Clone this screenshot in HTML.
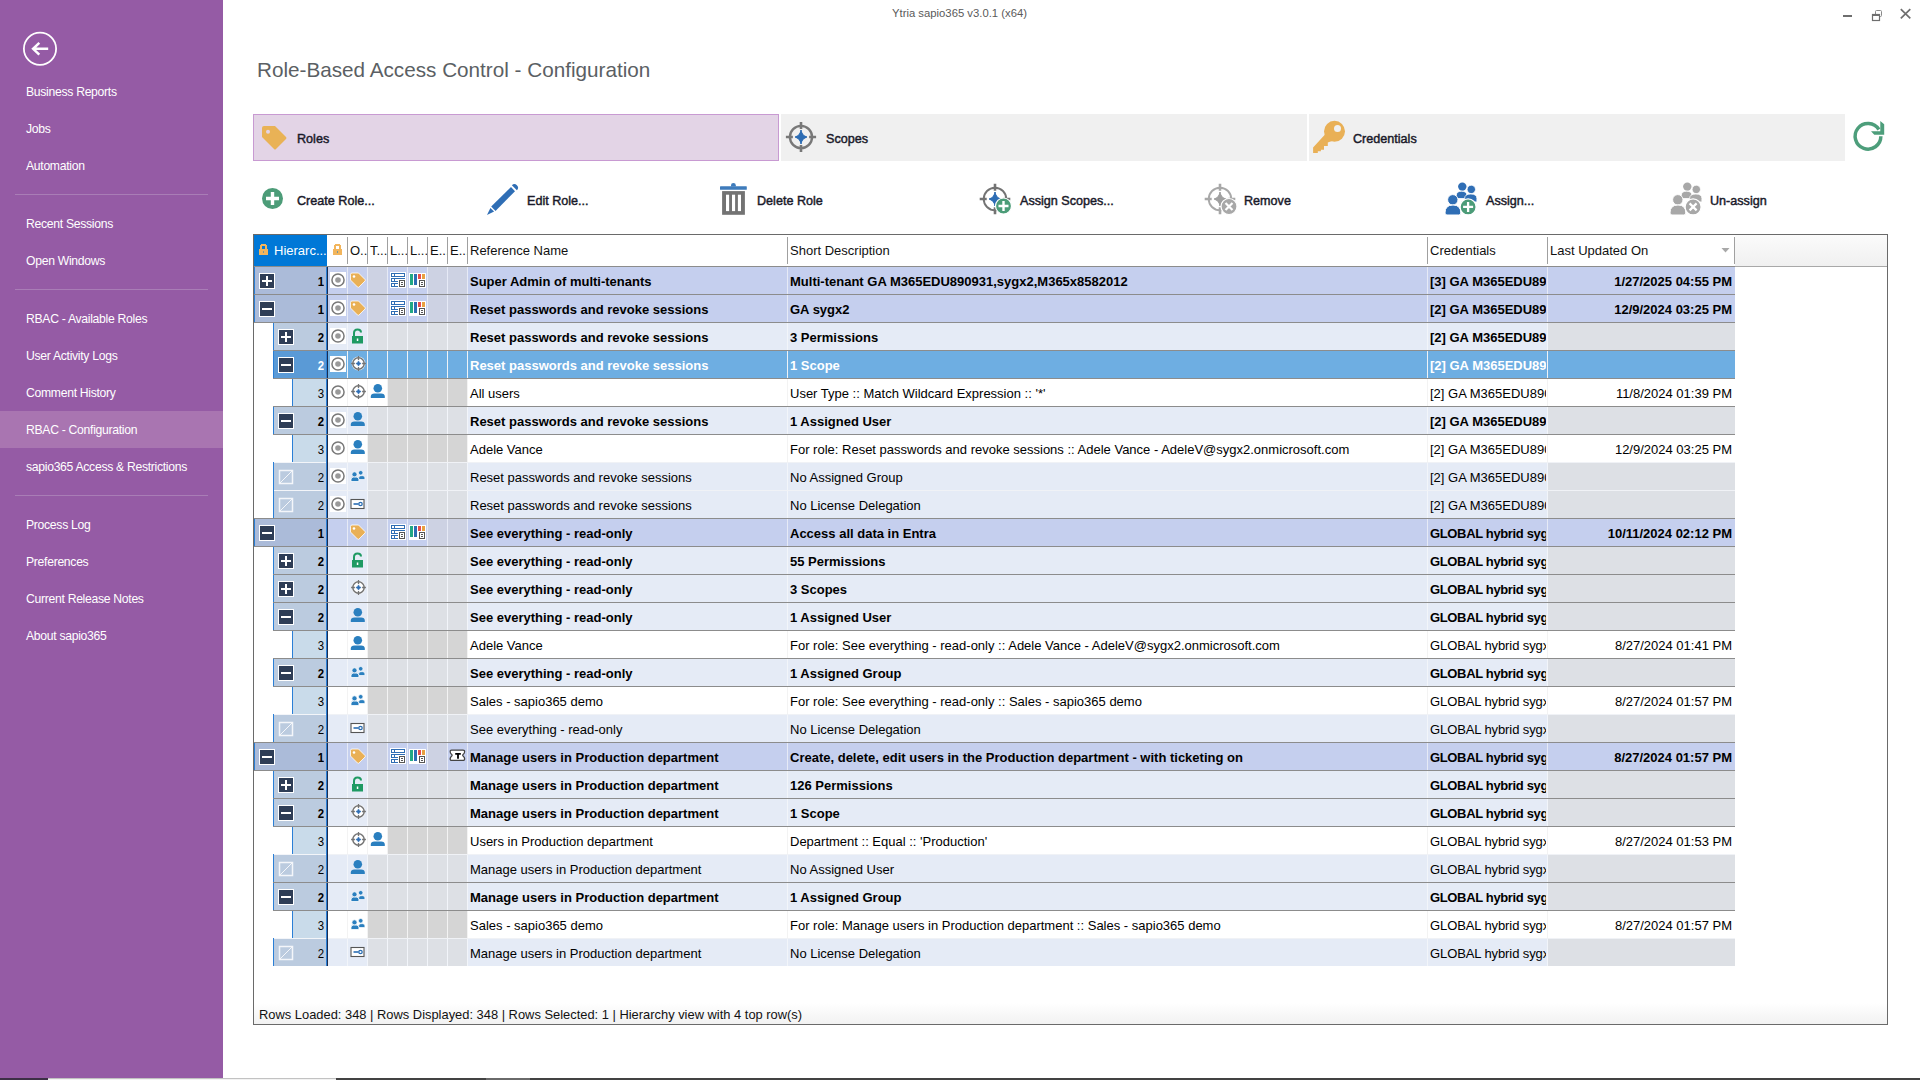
<!DOCTYPE html><html><head><meta charset="utf-8"><style>
*{margin:0;padding:0;box-sizing:border-box}
html,body{width:1920px;height:1080px;overflow:hidden;background:#fff;font-family:"Liberation Sans", sans-serif;}
.a{position:absolute}
.t{position:absolute;white-space:nowrap;line-height:1}
svg{position:absolute;overflow:visible}
</style></head><body><div class="a" style="left:0;top:0;width:223px;height:1078px;background:#955ba5"></div>
<div class="a" style="left:0;top:411px;width:223px;height:37px;background:#a975b1"></div>
<div class="a" style="left:15px;top:194px;width:193px;height:1px;background:#a97db6"></div>
<div class="a" style="left:15px;top:289px;width:193px;height:1px;background:#a97db6"></div>
<div class="a" style="left:15px;top:495px;width:193px;height:1px;background:#a97db6"></div>
<svg style="left:0;top:0" width="80" height="80"><circle cx="40" cy="48.8" r="16.1" fill="none" stroke="#fff" stroke-width="1.8"/><path d="M48.2 48.8 H33 M39.3 42.9 L33.1 48.8 L39.3 54.7" fill="none" stroke="#fff" stroke-width="2.5"/></svg>
<div class="t" style="left:26px;top:86px;font-size:12.2px;letter-spacing:-0.3px;color:#fff">Business Reports</div>
<div class="t" style="left:26px;top:123px;font-size:12.2px;letter-spacing:-0.3px;color:#fff">Jobs</div>
<div class="t" style="left:26px;top:160px;font-size:12.2px;letter-spacing:-0.3px;color:#fff">Automation</div>
<div class="t" style="left:26px;top:218px;font-size:12.2px;letter-spacing:-0.3px;color:#fff">Recent Sessions</div>
<div class="t" style="left:26px;top:255px;font-size:12.2px;letter-spacing:-0.3px;color:#fff">Open Windows</div>
<div class="t" style="left:26px;top:313px;font-size:12.2px;letter-spacing:-0.3px;color:#fff">RBAC - Available Roles</div>
<div class="t" style="left:26px;top:350px;font-size:12.2px;letter-spacing:-0.3px;color:#fff">User Activity Logs</div>
<div class="t" style="left:26px;top:387px;font-size:12.2px;letter-spacing:-0.3px;color:#fff">Comment History</div>
<div class="t" style="left:26px;top:424px;font-size:12.2px;letter-spacing:-0.3px;color:#fff">RBAC - Configuration</div>
<div class="t" style="left:26px;top:461px;font-size:12.2px;letter-spacing:-0.3px;color:#fff">sapio365 Access &amp; Restrictions</div>
<div class="t" style="left:26px;top:519px;font-size:12.2px;letter-spacing:-0.3px;color:#fff">Process Log</div>
<div class="t" style="left:26px;top:556px;font-size:12.2px;letter-spacing:-0.3px;color:#fff">Preferences</div>
<div class="t" style="left:26px;top:593px;font-size:12.2px;letter-spacing:-0.3px;color:#fff">Current Release Notes</div>
<div class="t" style="left:26px;top:630px;font-size:12.2px;letter-spacing:-0.3px;color:#fff">About sapio365</div>
<div class="a" style="left:0;top:1078px;width:1920px;height:2px;background:#434343"></div>
<div class="a" style="left:0;top:1078px;width:48px;height:2px;background:#3d2f46"></div>
<div class="a" style="left:48px;top:1078px;width:288px;height:1px;background:#c2c2c2"></div>
<div class="a" style="left:48px;top:1079px;width:288px;height:1px;background:#f2f2f2"></div>
<div class="a" style="left:486px;top:1078px;width:44px;height:2px;background:#6a6a6a"></div>
<div class="t" style="left:892px;top:8px;font-size:11.3px;color:#5a5a5a">Ytria sapio365 v3.0.1 (x64)</div>
<div class="a" style="left:1843px;top:15px;width:9px;height:2px;background:#6e6e6e"></div>
<svg style="left:1860px;top:0" width="40" height="30"><rect x="15.5" y="10.5" width="6" height="6" rx="1" fill="none" stroke="#8a8a8a" stroke-width="1"/><rect x="12.5" y="14.5" width="7" height="6" fill="#fff" stroke="#6e6e6e" stroke-width="1.2"/><rect x="12" y="14" width="8" height="2" fill="#6e6e6e"/></svg>
<svg style="left:1890px;top:0" width="30" height="30"><path d="M10.8 9.2 L20.3 18.3 M20.3 9.2 L10.8 18.3" stroke="#6e6e6e" stroke-width="1.7"/></svg>
<div class="t" style="left:257px;top:60px;font-size:20.7px;color:#5b5f64">Role-Based Access Control - Configuration</div>
<div class="a" style="left:253px;top:114px;width:526px;height:47px;background:#e3d4e6;border:1px solid #c89ad2"></div>
<div class="a" style="left:781px;top:114px;width:526px;height:47px;background:#f0f0f0"></div>
<div class="a" style="left:1309px;top:114px;width:536px;height:47px;background:#f0f0f0"></div>
<svg style="left:261px;top:125px" width="30" height="30"><path d="M1 3 Q1 1 3 1 L14 1 L25 12 Q26 13 25 14 L15 24 Q14 25 13 24 L1 12 Z" fill="#e9b256"/><circle cx="7" cy="6.8" r="2" fill="#e3d4e6"/></svg>
<div class="t" style="left:297px;top:133px;font-size:12.6px;-webkit-text-stroke:0.45px #1a1a2a;color:#1a1a2a">Roles</div>
<svg style="left:780px;top:116px" width="42" height="42"><circle cx="21" cy="21" r="11.1" fill="none" stroke="#787878" stroke-width="2.4"/><path d="M21 5.9 V12.9 M21 29.1 V36.1 M5.9 21 H12.9 M29.1 21 H36.1" stroke="#787878" stroke-width="2.6"/><path d="M21 15.7 Q22.5 19.5 26.3 21 Q22.5 22.5 21 26.3 Q19.5 22.5 15.7 21 Q19.5 19.5 21 15.7 Z" fill="#2e6db4" stroke="#2e6db4" stroke-width="1.2" stroke-linejoin="round"/><path d="M21 14.1 V27.9 M15.1 21 H26.9" stroke="#2e6db4" stroke-width="1.7"/></svg>
<div class="t" style="left:826px;top:133px;font-size:12.6px;-webkit-text-stroke:0.45px #1a1a2a;color:#1a1a2a">Scopes</div>
<svg style="left:1310px;top:116px" width="42" height="42"><circle cx="24.5" cy="15.3" r="10.5" fill="#e9b056"/><circle cx="27.5" cy="12.4" r="3.5" fill="#f0f0f0"/><path d="M15 18.6 L3.1 31.5 L3.1 37 L7.8 37 L7.8 35.3 L10.9 35.3 L10.9 33.7 L14 33.7 L14 30 L17.8 30 L17.8 26.5 L22 25 Z" fill="#e9b056"/></svg>
<div class="t" style="left:1353px;top:133px;font-size:12.6px;-webkit-text-stroke:0.45px #1a1a2a;color:#1a1a2a">Credentials</div>
<svg style="left:1840px;top:110px" width="50" height="50"><path d="M40.85 26.3 A12.85 12.85 0 1 1 38.9 19.5" fill="none" stroke="#4d9e7b" stroke-width="3.5"/><path d="M40.3 11 L44.2 14.3 L44.2 24.8 L34.3 24.8 L31 21.2 L40.3 21.2 Z" fill="#4d9e7b"/></svg>
<svg style="left:255px;top:180px" width="40" height="40"><circle cx="17.5" cy="18.5" r="10.5" fill="#4c9c78"/><path d="M17.5 12 V25 M11 18.5 H24" stroke="#fff" stroke-width="3.4"/></svg>
<div class="t" style="left:297px;top:195px;font-size:12.6px;-webkit-text-stroke:0.45px #1a1a2a;color:#1a1a2a">Create Role...</div>
<svg style="left:480px;top:176px" width="48" height="48"><path d="M11.2 30.5 L31 11 L35 15.2 L15.5 35 Z" fill="#2f6eb5"/><path d="M7 38.9 L10.4 32 L14.1 35.4 Z" fill="#2f6eb5"/><path d="M31.9 9.3 A3.5 3.5 0 0 1 36.9 14.3 Z" fill="#2f6eb5"/></svg>
<div class="t" style="left:527px;top:195px;font-size:12.6px;-webkit-text-stroke:0.45px #1a1a2a;color:#1a1a2a">Edit Role...</div>
<svg style="left:710px;top:176px" width="48" height="48"><rect x="10" y="10.2" width="26.8" height="3.6" rx="0.6" fill="#3e7bbb"/><path d="M21 10.5 V9.2 Q21 7 23.4 7 Q25.8 7 25.8 9.2 V10.5 Z" fill="#3e7bbb"/><rect x="12.1" y="15.1" width="22.8" height="23.7" fill="#737373"/><rect x="16" y="18.7" width="3.1" height="16.4" fill="#fff"/><rect x="22" y="18.7" width="3.1" height="16.4" fill="#fff"/><rect x="27.9" y="18.7" width="3.1" height="16.4" fill="#fff"/></svg>
<div class="t" style="left:757px;top:195px;font-size:12.6px;-webkit-text-stroke:0.45px #1a1a2a;color:#1a1a2a">Delete Role</div>
<svg style="left:970px;top:176px" width="48" height="48"><circle cx="25" cy="23" r="11.3" fill="none" stroke="#737373" stroke-width="1.9"/><path d="M25 7.699999999999999 V14.7 M25 31.299999999999997 V38.3 M9.7 23 H16.7 M33.3 23 H40.3" stroke="#737373" stroke-width="2.6"/><path d="M25 17.7 Q26.5 21.5 30.3 23 Q26.5 24.5 25 28.3 Q23.5 24.5 19.7 23 Q23.5 21.5 25 17.7 Z" fill="#2e6db4" stroke="#2e6db4" stroke-width="1.2" stroke-linejoin="round"/><path d="M25 16.1 V29.9 M19.1 23 H30.9" stroke="#2e6db4" stroke-width="1.7"/><circle cx="33.5" cy="30" r="8" fill="#4c9c78" stroke="#fff" stroke-width="1.2"/><path d="M33.5 25 V35 M28.5 30 H38.5" stroke="#fff" stroke-width="2.4"/></svg>
<div class="t" style="left:1020px;top:195px;font-size:12.6px;-webkit-text-stroke:0.45px #1a1a2a;color:#1a1a2a">Assign Scopes...</div>
<svg style="left:1195px;top:176px" width="48" height="48"><circle cx="25" cy="23" r="11.3" fill="none" stroke="#a8a8a8" stroke-width="1.9"/><path d="M25 7.699999999999999 V14.7 M25 31.299999999999997 V38.3 M9.7 23 H16.7 M33.3 23 H40.3" stroke="#a8a8a8" stroke-width="2.6"/><path d="M25 17.7 Q26.5 21.5 30.3 23 Q26.5 24.5 25 28.3 Q23.5 24.5 19.7 23 Q23.5 21.5 25 17.7 Z" fill="#a0a0a0" stroke="#a0a0a0" stroke-width="1.2" stroke-linejoin="round"/><path d="M25 16.1 V29.9 M19.1 23 H30.9" stroke="#a0a0a0" stroke-width="1.7"/><circle cx="34" cy="30.5" r="8" fill="#a8a8a8" stroke="#fff" stroke-width="1.2"/><path d="M30.5 27 L37.5 34 M37.5 27 L30.5 34" stroke="#fff" stroke-width="2.2"/></svg>
<div class="t" style="left:1244px;top:195px;font-size:12.6px;-webkit-text-stroke:0.45px #1a1a2a;color:#1a1a2a">Remove</div>
<svg style="left:1435px;top:175px" width="48" height="48"><circle cx="27.3" cy="11.6" r="4.2" fill="#2f6eb5"/><path d="M21.3 23.5 V20.5 Q21.3 16.2 26.6 16.2 Q31.9 16.2 31.9 20.5 V23.5 Z" fill="#2f6eb5" stroke="#fff" stroke-width="0.8"/><circle cx="36.3" cy="14.4" r="4.2" fill="#2f6eb5" stroke="#fff" stroke-width="0.8"/><path d="M29.6 26.9 V23.5 Q29.6 19 35.8 19 Q41.9 19 41.9 23.5 V26.9 Z" fill="#2f6eb5" stroke="#fff" stroke-width="0.8"/><circle cx="17.8" cy="24.8" r="5.2" fill="#2f6eb5" stroke="#fff" stroke-width="1"/><path d="M10 38 Q10 30 18 30 Q25.8 30 25.8 38 Q25.8 40 23.8 40 H12 Q10 40 10 38 Z" fill="#2f6eb5" stroke="#fff" stroke-width="1"/><circle cx="33.1" cy="31.9" r="8" fill="#4c9c78" stroke="#fff" stroke-width="1.2"/><path d="M33.1 27 V37 M28.1 31.9 H38.1" stroke="#fff" stroke-width="2.3"/></svg>
<div class="t" style="left:1486px;top:195px;font-size:12.6px;-webkit-text-stroke:0.45px #1a1a2a;color:#1a1a2a">Assign...</div>
<svg style="left:1660px;top:175px" width="48" height="48"><circle cx="27.3" cy="11.6" r="4.2" fill="#a8a8a8"/><path d="M21.3 23.5 V20.5 Q21.3 16.2 26.6 16.2 Q31.9 16.2 31.9 20.5 V23.5 Z" fill="#a8a8a8" stroke="#fff" stroke-width="0.8"/><circle cx="36.3" cy="14.4" r="4.2" fill="#a8a8a8" stroke="#fff" stroke-width="0.8"/><path d="M29.6 26.9 V23.5 Q29.6 19 35.8 19 Q41.9 19 41.9 23.5 V26.9 Z" fill="#a8a8a8" stroke="#fff" stroke-width="0.8"/><circle cx="17.8" cy="24.8" r="5.2" fill="#a8a8a8" stroke="#fff" stroke-width="1"/><path d="M10 38 Q10 30 18 30 Q25.8 30 25.8 38 Q25.8 40 23.8 40 H12 Q10 40 10 38 Z" fill="#a8a8a8" stroke="#fff" stroke-width="1"/><circle cx="33.1" cy="31.9" r="8" fill="#a8a8a8" stroke="#fff" stroke-width="1.2"/><path d="M29.6 28.4 L36.6 35.4 M36.6 28.4 L29.6 35.4" stroke="#fff" stroke-width="2.2"/></svg>
<div class="t" style="left:1710px;top:195px;font-size:12.6px;-webkit-text-stroke:0.45px #1a1a2a;color:#1a1a2a">Un-assign</div>
<div class="a" style="left:253px;top:234px;width:1635px;height:791px;border:1px solid #6a6a6a;background:#fff"></div>
<div class="a" style="left:1735px;top:235px;width:152px;height:31px;background:linear-gradient(#fbfbfb,#f0f0f0)"></div>
<div class="a" style="left:254px;top:235px;width:73px;height:31px;background:#0078d7"></div>
<div class="a" style="left:254px;top:266px;width:1633px;height:1px;background:#a8a8a8"></div>
<svg style="left:259px;top:244px" width="10" height="12" shape-rendering="crispEdges"><rect x="0" y="5" width="9" height="6" fill="#f2b55c"/><rect x="1" y="1" width="2" height="4" fill="#f2b55c"/><rect x="6" y="1" width="2" height="4" fill="#f2b55c"/><rect x="2" y="0" width="5" height="2" fill="#f2b55c"/><rect x="4" y="7" width="1" height="2" fill="#0078d7" opacity="0.5"/></svg>
<div class="t" style="left:274px;top:244px;font-size:13px;color:#fff">Hierarc...</div>
<svg style="left:333px;top:244px" width="10" height="12" shape-rendering="crispEdges"><rect x="0" y="5" width="9" height="6" fill="#f2b55c"/><rect x="1" y="1" width="2" height="4" fill="#f2b55c"/><rect x="6" y="1" width="2" height="4" fill="#f2b55c"/><rect x="2" y="0" width="5" height="2" fill="#f2b55c"/><rect x="4" y="7" width="1" height="2" fill="#0078d7" opacity="0.5"/></svg>
<div class="a" style="left:347px;top:237px;width:1px;height:27px;background:#a0a0a0"></div>
<div class="a" style="left:350px;top:240px;width:17px;height:22px;overflow:hidden"><div class="t" style="left:0;top:4px;font-size:13px;color:#111">O..</div></div>
<div class="a" style="left:367px;top:237px;width:1px;height:27px;background:#a0a0a0"></div>
<div class="a" style="left:370px;top:240px;width:17px;height:22px;overflow:hidden"><div class="t" style="left:0;top:4px;font-size:13px;color:#111">T...</div></div>
<div class="a" style="left:387px;top:237px;width:1px;height:27px;background:#a0a0a0"></div>
<div class="a" style="left:390px;top:240px;width:17px;height:22px;overflow:hidden"><div class="t" style="left:0;top:4px;font-size:13px;color:#111">L...</div></div>
<div class="a" style="left:407px;top:237px;width:1px;height:27px;background:#a0a0a0"></div>
<div class="a" style="left:410px;top:240px;width:17px;height:22px;overflow:hidden"><div class="t" style="left:0;top:4px;font-size:13px;color:#111">L...</div></div>
<div class="a" style="left:427px;top:237px;width:1px;height:27px;background:#a0a0a0"></div>
<div class="a" style="left:430px;top:240px;width:17px;height:22px;overflow:hidden"><div class="t" style="left:0;top:4px;font-size:13px;color:#111">E...</div></div>
<div class="a" style="left:447px;top:237px;width:1px;height:27px;background:#a0a0a0"></div>
<div class="a" style="left:450px;top:240px;width:17px;height:22px;overflow:hidden"><div class="t" style="left:0;top:4px;font-size:13px;color:#111">E...</div></div>
<div class="a" style="left:467px;top:237px;width:1px;height:27px;background:#a0a0a0"></div>
<div class="a" style="left:470px;top:240px;width:300px;height:22px;overflow:hidden"><div class="t" style="left:0;top:4px;font-size:13px;color:#111">Reference Name</div></div>
<div class="a" style="left:787px;top:237px;width:1px;height:27px;background:#a0a0a0"></div>
<div class="a" style="left:790px;top:240px;width:300px;height:22px;overflow:hidden"><div class="t" style="left:0;top:4px;font-size:13px;color:#111">Short Description</div></div>
<div class="a" style="left:1427px;top:237px;width:1px;height:27px;background:#a0a0a0"></div>
<div class="a" style="left:1430px;top:240px;width:300px;height:22px;overflow:hidden"><div class="t" style="left:0;top:4px;font-size:13px;color:#111">Credentials</div></div>
<div class="a" style="left:1547px;top:237px;width:1px;height:27px;background:#a0a0a0"></div>
<div class="a" style="left:1550px;top:240px;width:300px;height:22px;overflow:hidden"><div class="t" style="left:0;top:4px;font-size:13px;color:#111">Last Updated On</div></div>
<div class="a" style="left:1734px;top:237px;width:1px;height:27px;background:#a0a0a0"></div>
<svg style="left:1718px;top:245.5px" width="14" height="10"><path d="M3.5 2 L11.5 2 L7.5 6.5 Z" fill="#a8a8a8"/></svg>
<div class="a" style="left:254px;top:266px;width:72px;height:28px;background:#abbbd9"></div>
<div class="a" style="left:254px;top:266px;width:1px;height:28px;background:#2b7fd6"></div>
<div class="a" style="left:328px;top:266px;width:1407px;height:28px;background:#c5cfee"></div>
<div class="a" style="left:367px;top:266px;width:20px;height:28px;background:#cdd2e3"></div>
<div class="a" style="left:427px;top:266px;width:20px;height:28px;background:#cdd2e3"></div>
<div class="a" style="left:447px;top:266px;width:20px;height:28px;background:#cdd2e3"></div>
<div class="a" style="left:347px;top:266px;width:1px;height:28px;background:#e6eaf6"></div>
<div class="a" style="left:367px;top:266px;width:1px;height:28px;background:#e6eaf6"></div>
<div class="a" style="left:387px;top:266px;width:1px;height:28px;background:#e6eaf6"></div>
<div class="a" style="left:407px;top:266px;width:1px;height:28px;background:#e6eaf6"></div>
<div class="a" style="left:427px;top:266px;width:1px;height:28px;background:#e6eaf6"></div>
<div class="a" style="left:447px;top:266px;width:1px;height:28px;background:#e6eaf6"></div>
<div class="a" style="left:467px;top:266px;width:1px;height:28px;background:#e6eaf6"></div>
<div class="a" style="left:787px;top:266px;width:1px;height:28px;background:#e6eaf6"></div>
<div class="a" style="left:1427px;top:266px;width:1px;height:28px;background:#e6eaf6"></div>
<div class="a" style="left:1547px;top:266px;width:1px;height:28px;background:#e6eaf6"></div>
<div class="a" style="left:326px;top:266px;width:1px;height:28px;background:#2b7fd6"></div>
<div class="a" style="left:327px;top:266px;width:1px;height:28px;background:#1a2d50"></div>
<div class="t" style="left:254px;width:70px;text-align:right;top:275px;font-size:13px;font-weight:bold;color:#000;transform:scaleX(0.88);transform-origin:100% 50%">1</div>
<div class="t" style="left:470px;top:275px;font-size:13px;font-weight:bold;color:#000">Super Admin of multi-tenants</div>
<div class="t" style="left:790px;top:275px;font-size:13px;font-weight:bold;color:#000">Multi-tenant GA M365EDU890931,sygx2,M365x8582012</div>
<div class="a" style="left:1430px;top:267px;width:116px;height:26px;overflow:hidden"><div class="t" style="left:0;top:8px;font-size:13px;font-weight:bold;letter-spacing:0px;color:#000">[3] GA M365EDU890931</div></div>
<div class="t" style="left:1548px;width:184px;text-align:right;top:275px;font-size:13px;font-weight:bold;color:#000">1/27/2025 04:55 PM</div>
<div class="a" style="left:254px;top:294px;width:72px;height:28px;background:#abbbd9"></div>
<div class="a" style="left:254px;top:294px;width:1px;height:28px;background:#2b7fd6"></div>
<div class="a" style="left:328px;top:294px;width:1407px;height:28px;background:#c5cfee"></div>
<div class="a" style="left:367px;top:294px;width:20px;height:28px;background:#cdd2e3"></div>
<div class="a" style="left:427px;top:294px;width:20px;height:28px;background:#cdd2e3"></div>
<div class="a" style="left:447px;top:294px;width:20px;height:28px;background:#cdd2e3"></div>
<div class="a" style="left:347px;top:294px;width:1px;height:28px;background:#e6eaf6"></div>
<div class="a" style="left:367px;top:294px;width:1px;height:28px;background:#e6eaf6"></div>
<div class="a" style="left:387px;top:294px;width:1px;height:28px;background:#e6eaf6"></div>
<div class="a" style="left:407px;top:294px;width:1px;height:28px;background:#e6eaf6"></div>
<div class="a" style="left:427px;top:294px;width:1px;height:28px;background:#e6eaf6"></div>
<div class="a" style="left:447px;top:294px;width:1px;height:28px;background:#e6eaf6"></div>
<div class="a" style="left:467px;top:294px;width:1px;height:28px;background:#e6eaf6"></div>
<div class="a" style="left:787px;top:294px;width:1px;height:28px;background:#e6eaf6"></div>
<div class="a" style="left:1427px;top:294px;width:1px;height:28px;background:#e6eaf6"></div>
<div class="a" style="left:1547px;top:294px;width:1px;height:28px;background:#e6eaf6"></div>
<div class="a" style="left:326px;top:294px;width:1px;height:28px;background:#2b7fd6"></div>
<div class="a" style="left:327px;top:294px;width:1px;height:28px;background:#1a2d50"></div>
<div class="t" style="left:254px;width:70px;text-align:right;top:303px;font-size:13px;font-weight:bold;color:#000;transform:scaleX(0.88);transform-origin:100% 50%">1</div>
<div class="t" style="left:470px;top:303px;font-size:13px;font-weight:bold;color:#000">Reset passwords and revoke sessions</div>
<div class="t" style="left:790px;top:303px;font-size:13px;font-weight:bold;color:#000">GA sygx2</div>
<div class="a" style="left:1430px;top:295px;width:116px;height:26px;overflow:hidden"><div class="t" style="left:0;top:8px;font-size:13px;font-weight:bold;letter-spacing:0px;color:#000">[2] GA M365EDU890931</div></div>
<div class="t" style="left:1548px;width:184px;text-align:right;top:303px;font-size:13px;font-weight:bold;color:#000">12/9/2024 03:25 PM</div>
<div class="a" style="left:273px;top:322px;width:53px;height:28px;background:#bbcbdf"></div>
<div class="a" style="left:273px;top:322px;width:1px;height:28px;background:#2b7fd6"></div>
<div class="a" style="left:328px;top:322px;width:1407px;height:28px;background:#e5ebf6"></div>
<div class="a" style="left:367px;top:322px;width:20px;height:28px;background:#dde0e5"></div>
<div class="a" style="left:387px;top:322px;width:40px;height:28px;background:#dde0e5"></div>
<div class="a" style="left:427px;top:322px;width:20px;height:28px;background:#dde0e5"></div>
<div class="a" style="left:447px;top:322px;width:20px;height:28px;background:#dde0e5"></div>
<div class="a" style="left:1547px;top:322px;width:188px;height:28px;background:#dde0e5"></div>
<div class="a" style="left:347px;top:322px;width:1px;height:28px;background:#f2f5fa"></div>
<div class="a" style="left:367px;top:322px;width:1px;height:28px;background:#f2f5fa"></div>
<div class="a" style="left:387px;top:322px;width:1px;height:28px;background:#f2f5fa"></div>
<div class="a" style="left:407px;top:322px;width:1px;height:28px;background:#f2f5fa"></div>
<div class="a" style="left:427px;top:322px;width:1px;height:28px;background:#f2f5fa"></div>
<div class="a" style="left:447px;top:322px;width:1px;height:28px;background:#f2f5fa"></div>
<div class="a" style="left:467px;top:322px;width:1px;height:28px;background:#f2f5fa"></div>
<div class="a" style="left:787px;top:322px;width:1px;height:28px;background:#f2f5fa"></div>
<div class="a" style="left:1427px;top:322px;width:1px;height:28px;background:#f2f5fa"></div>
<div class="a" style="left:1547px;top:322px;width:1px;height:28px;background:#f2f5fa"></div>
<div class="a" style="left:326px;top:322px;width:1px;height:28px;background:#2b7fd6"></div>
<div class="a" style="left:327px;top:322px;width:1px;height:28px;background:#1a2d50"></div>
<div class="t" style="left:273px;width:51px;text-align:right;top:331px;font-size:13px;font-weight:bold;color:#000;transform:scaleX(0.88);transform-origin:100% 50%">2</div>
<div class="t" style="left:470px;top:331px;font-size:13px;font-weight:bold;color:#000">Reset passwords and revoke sessions</div>
<div class="t" style="left:790px;top:331px;font-size:13px;font-weight:bold;color:#000">3 Permissions</div>
<div class="a" style="left:1430px;top:323px;width:116px;height:26px;overflow:hidden"><div class="t" style="left:0;top:8px;font-size:13px;font-weight:bold;letter-spacing:0px;color:#000">[2] GA M365EDU890931</div></div>
<div class="a" style="left:273px;top:350px;width:53px;height:28px;background:#5a9ad6"></div>
<div class="a" style="left:273px;top:350px;width:1px;height:28px;background:#2b7fd6"></div>
<div class="a" style="left:328px;top:350px;width:1407px;height:28px;background:#6eaee2"></div>
<div class="a" style="left:367px;top:350px;width:20px;height:28px;background:#6eaee2"></div>
<div class="a" style="left:387px;top:350px;width:40px;height:28px;background:#6eaee2"></div>
<div class="a" style="left:427px;top:350px;width:20px;height:28px;background:#6eaee2"></div>
<div class="a" style="left:447px;top:350px;width:20px;height:28px;background:#6eaee2"></div>
<div class="a" style="left:1547px;top:350px;width:188px;height:28px;background:#6eaee2"></div>
<div class="a" style="left:347px;top:350px;width:1px;height:28px;background:#eef2f6"></div>
<div class="a" style="left:367px;top:350px;width:1px;height:28px;background:#eef2f6"></div>
<div class="a" style="left:387px;top:350px;width:1px;height:28px;background:#eef2f6"></div>
<div class="a" style="left:407px;top:350px;width:1px;height:28px;background:#eef2f6"></div>
<div class="a" style="left:427px;top:350px;width:1px;height:28px;background:#eef2f6"></div>
<div class="a" style="left:447px;top:350px;width:1px;height:28px;background:#eef2f6"></div>
<div class="a" style="left:467px;top:350px;width:1px;height:28px;background:#eef2f6"></div>
<div class="a" style="left:787px;top:350px;width:1px;height:28px;background:#eef2f6"></div>
<div class="a" style="left:1427px;top:350px;width:1px;height:28px;background:#eef2f6"></div>
<div class="a" style="left:1547px;top:350px;width:1px;height:28px;background:#eef2f6"></div>
<div class="a" style="left:326px;top:350px;width:1px;height:28px;background:#2b7fd6"></div>
<div class="a" style="left:327px;top:350px;width:1px;height:28px;background:#1a2d50"></div>
<div class="t" style="left:273px;width:51px;text-align:right;top:359px;font-size:13px;font-weight:bold;color:#fff;transform:scaleX(0.88);transform-origin:100% 50%">2</div>
<div class="t" style="left:470px;top:359px;font-size:13px;font-weight:bold;color:#fff">Reset passwords and revoke sessions</div>
<div class="t" style="left:790px;top:359px;font-size:13px;font-weight:bold;color:#fff">1 Scope</div>
<div class="a" style="left:1430px;top:351px;width:116px;height:26px;overflow:hidden"><div class="t" style="left:0;top:8px;font-size:13px;font-weight:bold;letter-spacing:0px;color:#fff">[2] GA M365EDU890931</div></div>
<div class="a" style="left:292px;top:378px;width:34px;height:28px;background:#c9dbea"></div>
<div class="a" style="left:292px;top:378px;width:1px;height:28px;background:#2b7fd6"></div>
<div class="a" style="left:328px;top:378px;width:1407px;height:28px;background:#ffffff"></div>
<div class="a" style="left:387px;top:378px;width:40px;height:28px;background:#d5d5d5"></div>
<div class="a" style="left:427px;top:378px;width:20px;height:28px;background:#d5d5d5"></div>
<div class="a" style="left:447px;top:378px;width:20px;height:28px;background:#d5d5d5"></div>
<div class="a" style="left:347px;top:378px;width:1px;height:28px;background:#f3f3f3"></div>
<div class="a" style="left:367px;top:378px;width:1px;height:28px;background:#f3f3f3"></div>
<div class="a" style="left:387px;top:378px;width:1px;height:28px;background:#f3f3f3"></div>
<div class="a" style="left:407px;top:378px;width:1px;height:28px;background:#f3f3f3"></div>
<div class="a" style="left:427px;top:378px;width:1px;height:28px;background:#f3f3f3"></div>
<div class="a" style="left:447px;top:378px;width:1px;height:28px;background:#f3f3f3"></div>
<div class="a" style="left:467px;top:378px;width:1px;height:28px;background:#f3f3f3"></div>
<div class="a" style="left:787px;top:378px;width:1px;height:28px;background:#f3f3f3"></div>
<div class="a" style="left:1427px;top:378px;width:1px;height:28px;background:#f3f3f3"></div>
<div class="a" style="left:1547px;top:378px;width:1px;height:28px;background:#f3f3f3"></div>
<div class="a" style="left:326px;top:378px;width:1px;height:28px;background:#2b7fd6"></div>
<div class="a" style="left:327px;top:378px;width:1px;height:28px;background:#1a2d50"></div>
<div class="t" style="left:292px;width:32px;text-align:right;top:387px;font-size:13px;font-weight:normal;color:#000;transform:scaleX(0.88);transform-origin:100% 50%">3</div>
<div class="t" style="left:470px;top:387px;font-size:13px;font-weight:normal;color:#000">All users</div>
<div class="t" style="left:790px;top:387px;font-size:13px;font-weight:normal;color:#000">User Type :: Match Wildcard Expression :: '*'</div>
<div class="a" style="left:1430px;top:379px;width:116px;height:26px;overflow:hidden"><div class="t" style="left:0;top:8px;font-size:13px;font-weight:normal;letter-spacing:0px;color:#000">[2] GA M365EDU890931</div></div>
<div class="t" style="left:1548px;width:184px;text-align:right;top:387px;font-size:13px;font-weight:normal;color:#000">11/8/2024 01:39 PM</div>
<div class="a" style="left:273px;top:406px;width:53px;height:28px;background:#bbcbdf"></div>
<div class="a" style="left:273px;top:406px;width:1px;height:28px;background:#2b7fd6"></div>
<div class="a" style="left:328px;top:406px;width:1407px;height:28px;background:#e5ebf6"></div>
<div class="a" style="left:367px;top:406px;width:20px;height:28px;background:#dde0e5"></div>
<div class="a" style="left:387px;top:406px;width:40px;height:28px;background:#dde0e5"></div>
<div class="a" style="left:427px;top:406px;width:20px;height:28px;background:#dde0e5"></div>
<div class="a" style="left:447px;top:406px;width:20px;height:28px;background:#dde0e5"></div>
<div class="a" style="left:1547px;top:406px;width:188px;height:28px;background:#dde0e5"></div>
<div class="a" style="left:347px;top:406px;width:1px;height:28px;background:#f2f5fa"></div>
<div class="a" style="left:367px;top:406px;width:1px;height:28px;background:#f2f5fa"></div>
<div class="a" style="left:387px;top:406px;width:1px;height:28px;background:#f2f5fa"></div>
<div class="a" style="left:407px;top:406px;width:1px;height:28px;background:#f2f5fa"></div>
<div class="a" style="left:427px;top:406px;width:1px;height:28px;background:#f2f5fa"></div>
<div class="a" style="left:447px;top:406px;width:1px;height:28px;background:#f2f5fa"></div>
<div class="a" style="left:467px;top:406px;width:1px;height:28px;background:#f2f5fa"></div>
<div class="a" style="left:787px;top:406px;width:1px;height:28px;background:#f2f5fa"></div>
<div class="a" style="left:1427px;top:406px;width:1px;height:28px;background:#f2f5fa"></div>
<div class="a" style="left:1547px;top:406px;width:1px;height:28px;background:#f2f5fa"></div>
<div class="a" style="left:326px;top:406px;width:1px;height:28px;background:#2b7fd6"></div>
<div class="a" style="left:327px;top:406px;width:1px;height:28px;background:#1a2d50"></div>
<div class="t" style="left:273px;width:51px;text-align:right;top:415px;font-size:13px;font-weight:bold;color:#000;transform:scaleX(0.88);transform-origin:100% 50%">2</div>
<div class="t" style="left:470px;top:415px;font-size:13px;font-weight:bold;color:#000">Reset passwords and revoke sessions</div>
<div class="t" style="left:790px;top:415px;font-size:13px;font-weight:bold;color:#000">1 Assigned User</div>
<div class="a" style="left:1430px;top:407px;width:116px;height:26px;overflow:hidden"><div class="t" style="left:0;top:8px;font-size:13px;font-weight:bold;letter-spacing:0px;color:#000">[2] GA M365EDU890931</div></div>
<div class="a" style="left:292px;top:434px;width:34px;height:28px;background:#c9dbea"></div>
<div class="a" style="left:292px;top:434px;width:1px;height:28px;background:#2b7fd6"></div>
<div class="a" style="left:328px;top:434px;width:1407px;height:28px;background:#ffffff"></div>
<div class="a" style="left:367px;top:434px;width:20px;height:28px;background:#d5d5d5"></div>
<div class="a" style="left:387px;top:434px;width:40px;height:28px;background:#d5d5d5"></div>
<div class="a" style="left:427px;top:434px;width:20px;height:28px;background:#d5d5d5"></div>
<div class="a" style="left:447px;top:434px;width:20px;height:28px;background:#d5d5d5"></div>
<div class="a" style="left:347px;top:434px;width:1px;height:28px;background:#f3f3f3"></div>
<div class="a" style="left:367px;top:434px;width:1px;height:28px;background:#f3f3f3"></div>
<div class="a" style="left:387px;top:434px;width:1px;height:28px;background:#f3f3f3"></div>
<div class="a" style="left:407px;top:434px;width:1px;height:28px;background:#f3f3f3"></div>
<div class="a" style="left:427px;top:434px;width:1px;height:28px;background:#f3f3f3"></div>
<div class="a" style="left:447px;top:434px;width:1px;height:28px;background:#f3f3f3"></div>
<div class="a" style="left:467px;top:434px;width:1px;height:28px;background:#f3f3f3"></div>
<div class="a" style="left:787px;top:434px;width:1px;height:28px;background:#f3f3f3"></div>
<div class="a" style="left:1427px;top:434px;width:1px;height:28px;background:#f3f3f3"></div>
<div class="a" style="left:1547px;top:434px;width:1px;height:28px;background:#f3f3f3"></div>
<div class="a" style="left:326px;top:434px;width:1px;height:28px;background:#2b7fd6"></div>
<div class="a" style="left:327px;top:434px;width:1px;height:28px;background:#1a2d50"></div>
<div class="t" style="left:292px;width:32px;text-align:right;top:443px;font-size:13px;font-weight:normal;color:#000;transform:scaleX(0.88);transform-origin:100% 50%">3</div>
<div class="t" style="left:470px;top:443px;font-size:13px;font-weight:normal;color:#000">Adele Vance</div>
<div class="t" style="left:790px;top:443px;font-size:13px;font-weight:normal;color:#000">For role: Reset passwords and revoke sessions :: Adele Vance - AdeleV@sygx2.onmicrosoft.com</div>
<div class="a" style="left:1430px;top:435px;width:116px;height:26px;overflow:hidden"><div class="t" style="left:0;top:8px;font-size:13px;font-weight:normal;letter-spacing:0px;color:#000">[2] GA M365EDU890931</div></div>
<div class="t" style="left:1548px;width:184px;text-align:right;top:443px;font-size:13px;font-weight:normal;color:#000">12/9/2024 03:25 PM</div>
<div class="a" style="left:273px;top:462px;width:53px;height:28px;background:#bbcbdf"></div>
<div class="a" style="left:273px;top:462px;width:1px;height:28px;background:#2b7fd6"></div>
<div class="a" style="left:328px;top:462px;width:1407px;height:28px;background:#e5ebf6"></div>
<div class="a" style="left:367px;top:462px;width:20px;height:28px;background:#dde0e5"></div>
<div class="a" style="left:387px;top:462px;width:40px;height:28px;background:#dde0e5"></div>
<div class="a" style="left:427px;top:462px;width:20px;height:28px;background:#dde0e5"></div>
<div class="a" style="left:447px;top:462px;width:20px;height:28px;background:#dde0e5"></div>
<div class="a" style="left:1547px;top:462px;width:188px;height:28px;background:#dde0e5"></div>
<div class="a" style="left:347px;top:462px;width:1px;height:28px;background:#f2f5fa"></div>
<div class="a" style="left:367px;top:462px;width:1px;height:28px;background:#f2f5fa"></div>
<div class="a" style="left:387px;top:462px;width:1px;height:28px;background:#f2f5fa"></div>
<div class="a" style="left:407px;top:462px;width:1px;height:28px;background:#f2f5fa"></div>
<div class="a" style="left:427px;top:462px;width:1px;height:28px;background:#f2f5fa"></div>
<div class="a" style="left:447px;top:462px;width:1px;height:28px;background:#f2f5fa"></div>
<div class="a" style="left:467px;top:462px;width:1px;height:28px;background:#f2f5fa"></div>
<div class="a" style="left:787px;top:462px;width:1px;height:28px;background:#f2f5fa"></div>
<div class="a" style="left:1427px;top:462px;width:1px;height:28px;background:#f2f5fa"></div>
<div class="a" style="left:1547px;top:462px;width:1px;height:28px;background:#f2f5fa"></div>
<div class="a" style="left:326px;top:462px;width:1px;height:28px;background:#2b7fd6"></div>
<div class="a" style="left:327px;top:462px;width:1px;height:28px;background:#1a2d50"></div>
<div class="t" style="left:273px;width:51px;text-align:right;top:471px;font-size:13px;font-weight:normal;color:#000;transform:scaleX(0.88);transform-origin:100% 50%">2</div>
<div class="t" style="left:470px;top:471px;font-size:13px;font-weight:normal;color:#000">Reset passwords and revoke sessions</div>
<div class="t" style="left:790px;top:471px;font-size:13px;font-weight:normal;color:#000">No Assigned Group</div>
<div class="a" style="left:1430px;top:463px;width:116px;height:26px;overflow:hidden"><div class="t" style="left:0;top:8px;font-size:13px;font-weight:normal;letter-spacing:0px;color:#000">[2] GA M365EDU890931</div></div>
<div class="a" style="left:273px;top:490px;width:53px;height:28px;background:#bbcbdf"></div>
<div class="a" style="left:273px;top:490px;width:1px;height:28px;background:#2b7fd6"></div>
<div class="a" style="left:328px;top:490px;width:1407px;height:28px;background:#e5ebf6"></div>
<div class="a" style="left:367px;top:490px;width:20px;height:28px;background:#dde0e5"></div>
<div class="a" style="left:387px;top:490px;width:40px;height:28px;background:#dde0e5"></div>
<div class="a" style="left:427px;top:490px;width:20px;height:28px;background:#dde0e5"></div>
<div class="a" style="left:447px;top:490px;width:20px;height:28px;background:#dde0e5"></div>
<div class="a" style="left:1547px;top:490px;width:188px;height:28px;background:#dde0e5"></div>
<div class="a" style="left:347px;top:490px;width:1px;height:28px;background:#f2f5fa"></div>
<div class="a" style="left:367px;top:490px;width:1px;height:28px;background:#f2f5fa"></div>
<div class="a" style="left:387px;top:490px;width:1px;height:28px;background:#f2f5fa"></div>
<div class="a" style="left:407px;top:490px;width:1px;height:28px;background:#f2f5fa"></div>
<div class="a" style="left:427px;top:490px;width:1px;height:28px;background:#f2f5fa"></div>
<div class="a" style="left:447px;top:490px;width:1px;height:28px;background:#f2f5fa"></div>
<div class="a" style="left:467px;top:490px;width:1px;height:28px;background:#f2f5fa"></div>
<div class="a" style="left:787px;top:490px;width:1px;height:28px;background:#f2f5fa"></div>
<div class="a" style="left:1427px;top:490px;width:1px;height:28px;background:#f2f5fa"></div>
<div class="a" style="left:1547px;top:490px;width:1px;height:28px;background:#f2f5fa"></div>
<div class="a" style="left:326px;top:490px;width:1px;height:28px;background:#2b7fd6"></div>
<div class="a" style="left:327px;top:490px;width:1px;height:28px;background:#1a2d50"></div>
<div class="t" style="left:273px;width:51px;text-align:right;top:499px;font-size:13px;font-weight:normal;color:#000;transform:scaleX(0.88);transform-origin:100% 50%">2</div>
<div class="t" style="left:470px;top:499px;font-size:13px;font-weight:normal;color:#000">Reset passwords and revoke sessions</div>
<div class="t" style="left:790px;top:499px;font-size:13px;font-weight:normal;color:#000">No License Delegation</div>
<div class="a" style="left:1430px;top:491px;width:116px;height:26px;overflow:hidden"><div class="t" style="left:0;top:8px;font-size:13px;font-weight:normal;letter-spacing:0px;color:#000">[2] GA M365EDU890931</div></div>
<div class="a" style="left:254px;top:518px;width:72px;height:28px;background:#abbbd9"></div>
<div class="a" style="left:254px;top:518px;width:1px;height:28px;background:#2b7fd6"></div>
<div class="a" style="left:328px;top:518px;width:1407px;height:28px;background:#c5cfee"></div>
<div class="a" style="left:367px;top:518px;width:20px;height:28px;background:#cdd2e3"></div>
<div class="a" style="left:427px;top:518px;width:20px;height:28px;background:#cdd2e3"></div>
<div class="a" style="left:447px;top:518px;width:20px;height:28px;background:#cdd2e3"></div>
<div class="a" style="left:347px;top:518px;width:1px;height:28px;background:#e6eaf6"></div>
<div class="a" style="left:367px;top:518px;width:1px;height:28px;background:#e6eaf6"></div>
<div class="a" style="left:387px;top:518px;width:1px;height:28px;background:#e6eaf6"></div>
<div class="a" style="left:407px;top:518px;width:1px;height:28px;background:#e6eaf6"></div>
<div class="a" style="left:427px;top:518px;width:1px;height:28px;background:#e6eaf6"></div>
<div class="a" style="left:447px;top:518px;width:1px;height:28px;background:#e6eaf6"></div>
<div class="a" style="left:467px;top:518px;width:1px;height:28px;background:#e6eaf6"></div>
<div class="a" style="left:787px;top:518px;width:1px;height:28px;background:#e6eaf6"></div>
<div class="a" style="left:1427px;top:518px;width:1px;height:28px;background:#e6eaf6"></div>
<div class="a" style="left:1547px;top:518px;width:1px;height:28px;background:#e6eaf6"></div>
<div class="a" style="left:326px;top:518px;width:1px;height:28px;background:#2b7fd6"></div>
<div class="a" style="left:327px;top:518px;width:1px;height:28px;background:#1a2d50"></div>
<div class="t" style="left:254px;width:70px;text-align:right;top:527px;font-size:13px;font-weight:bold;color:#000;transform:scaleX(0.88);transform-origin:100% 50%">1</div>
<div class="t" style="left:470px;top:527px;font-size:13px;font-weight:bold;color:#000">See everything - read-only</div>
<div class="t" style="left:790px;top:527px;font-size:13px;font-weight:bold;color:#000">Access all data in Entra</div>
<div class="a" style="left:1430px;top:519px;width:116px;height:26px;overflow:hidden"><div class="t" style="left:0;top:8px;font-size:13px;font-weight:bold;letter-spacing:-0.35px;color:#000">GLOBAL hybrid sygx2</div></div>
<div class="t" style="left:1548px;width:184px;text-align:right;top:527px;font-size:13px;font-weight:bold;color:#000">10/11/2024 02:12 PM</div>
<div class="a" style="left:273px;top:546px;width:53px;height:28px;background:#bbcbdf"></div>
<div class="a" style="left:273px;top:546px;width:1px;height:28px;background:#2b7fd6"></div>
<div class="a" style="left:328px;top:546px;width:1407px;height:28px;background:#e5ebf6"></div>
<div class="a" style="left:367px;top:546px;width:20px;height:28px;background:#dde0e5"></div>
<div class="a" style="left:387px;top:546px;width:40px;height:28px;background:#dde0e5"></div>
<div class="a" style="left:427px;top:546px;width:20px;height:28px;background:#dde0e5"></div>
<div class="a" style="left:447px;top:546px;width:20px;height:28px;background:#dde0e5"></div>
<div class="a" style="left:1547px;top:546px;width:188px;height:28px;background:#dde0e5"></div>
<div class="a" style="left:347px;top:546px;width:1px;height:28px;background:#f2f5fa"></div>
<div class="a" style="left:367px;top:546px;width:1px;height:28px;background:#f2f5fa"></div>
<div class="a" style="left:387px;top:546px;width:1px;height:28px;background:#f2f5fa"></div>
<div class="a" style="left:407px;top:546px;width:1px;height:28px;background:#f2f5fa"></div>
<div class="a" style="left:427px;top:546px;width:1px;height:28px;background:#f2f5fa"></div>
<div class="a" style="left:447px;top:546px;width:1px;height:28px;background:#f2f5fa"></div>
<div class="a" style="left:467px;top:546px;width:1px;height:28px;background:#f2f5fa"></div>
<div class="a" style="left:787px;top:546px;width:1px;height:28px;background:#f2f5fa"></div>
<div class="a" style="left:1427px;top:546px;width:1px;height:28px;background:#f2f5fa"></div>
<div class="a" style="left:1547px;top:546px;width:1px;height:28px;background:#f2f5fa"></div>
<div class="a" style="left:326px;top:546px;width:1px;height:28px;background:#2b7fd6"></div>
<div class="a" style="left:327px;top:546px;width:1px;height:28px;background:#1a2d50"></div>
<div class="t" style="left:273px;width:51px;text-align:right;top:555px;font-size:13px;font-weight:bold;color:#000;transform:scaleX(0.88);transform-origin:100% 50%">2</div>
<div class="t" style="left:470px;top:555px;font-size:13px;font-weight:bold;color:#000">See everything - read-only</div>
<div class="t" style="left:790px;top:555px;font-size:13px;font-weight:bold;color:#000">55 Permissions</div>
<div class="a" style="left:1430px;top:547px;width:116px;height:26px;overflow:hidden"><div class="t" style="left:0;top:8px;font-size:13px;font-weight:bold;letter-spacing:-0.35px;color:#000">GLOBAL hybrid sygx2</div></div>
<div class="a" style="left:273px;top:574px;width:53px;height:28px;background:#bbcbdf"></div>
<div class="a" style="left:273px;top:574px;width:1px;height:28px;background:#2b7fd6"></div>
<div class="a" style="left:328px;top:574px;width:1407px;height:28px;background:#e5ebf6"></div>
<div class="a" style="left:367px;top:574px;width:20px;height:28px;background:#dde0e5"></div>
<div class="a" style="left:387px;top:574px;width:40px;height:28px;background:#dde0e5"></div>
<div class="a" style="left:427px;top:574px;width:20px;height:28px;background:#dde0e5"></div>
<div class="a" style="left:447px;top:574px;width:20px;height:28px;background:#dde0e5"></div>
<div class="a" style="left:1547px;top:574px;width:188px;height:28px;background:#dde0e5"></div>
<div class="a" style="left:347px;top:574px;width:1px;height:28px;background:#f2f5fa"></div>
<div class="a" style="left:367px;top:574px;width:1px;height:28px;background:#f2f5fa"></div>
<div class="a" style="left:387px;top:574px;width:1px;height:28px;background:#f2f5fa"></div>
<div class="a" style="left:407px;top:574px;width:1px;height:28px;background:#f2f5fa"></div>
<div class="a" style="left:427px;top:574px;width:1px;height:28px;background:#f2f5fa"></div>
<div class="a" style="left:447px;top:574px;width:1px;height:28px;background:#f2f5fa"></div>
<div class="a" style="left:467px;top:574px;width:1px;height:28px;background:#f2f5fa"></div>
<div class="a" style="left:787px;top:574px;width:1px;height:28px;background:#f2f5fa"></div>
<div class="a" style="left:1427px;top:574px;width:1px;height:28px;background:#f2f5fa"></div>
<div class="a" style="left:1547px;top:574px;width:1px;height:28px;background:#f2f5fa"></div>
<div class="a" style="left:326px;top:574px;width:1px;height:28px;background:#2b7fd6"></div>
<div class="a" style="left:327px;top:574px;width:1px;height:28px;background:#1a2d50"></div>
<div class="t" style="left:273px;width:51px;text-align:right;top:583px;font-size:13px;font-weight:bold;color:#000;transform:scaleX(0.88);transform-origin:100% 50%">2</div>
<div class="t" style="left:470px;top:583px;font-size:13px;font-weight:bold;color:#000">See everything - read-only</div>
<div class="t" style="left:790px;top:583px;font-size:13px;font-weight:bold;color:#000">3 Scopes</div>
<div class="a" style="left:1430px;top:575px;width:116px;height:26px;overflow:hidden"><div class="t" style="left:0;top:8px;font-size:13px;font-weight:bold;letter-spacing:-0.35px;color:#000">GLOBAL hybrid sygx2</div></div>
<div class="a" style="left:273px;top:602px;width:53px;height:28px;background:#bbcbdf"></div>
<div class="a" style="left:273px;top:602px;width:1px;height:28px;background:#2b7fd6"></div>
<div class="a" style="left:328px;top:602px;width:1407px;height:28px;background:#e5ebf6"></div>
<div class="a" style="left:367px;top:602px;width:20px;height:28px;background:#dde0e5"></div>
<div class="a" style="left:387px;top:602px;width:40px;height:28px;background:#dde0e5"></div>
<div class="a" style="left:427px;top:602px;width:20px;height:28px;background:#dde0e5"></div>
<div class="a" style="left:447px;top:602px;width:20px;height:28px;background:#dde0e5"></div>
<div class="a" style="left:1547px;top:602px;width:188px;height:28px;background:#dde0e5"></div>
<div class="a" style="left:347px;top:602px;width:1px;height:28px;background:#f2f5fa"></div>
<div class="a" style="left:367px;top:602px;width:1px;height:28px;background:#f2f5fa"></div>
<div class="a" style="left:387px;top:602px;width:1px;height:28px;background:#f2f5fa"></div>
<div class="a" style="left:407px;top:602px;width:1px;height:28px;background:#f2f5fa"></div>
<div class="a" style="left:427px;top:602px;width:1px;height:28px;background:#f2f5fa"></div>
<div class="a" style="left:447px;top:602px;width:1px;height:28px;background:#f2f5fa"></div>
<div class="a" style="left:467px;top:602px;width:1px;height:28px;background:#f2f5fa"></div>
<div class="a" style="left:787px;top:602px;width:1px;height:28px;background:#f2f5fa"></div>
<div class="a" style="left:1427px;top:602px;width:1px;height:28px;background:#f2f5fa"></div>
<div class="a" style="left:1547px;top:602px;width:1px;height:28px;background:#f2f5fa"></div>
<div class="a" style="left:326px;top:602px;width:1px;height:28px;background:#2b7fd6"></div>
<div class="a" style="left:327px;top:602px;width:1px;height:28px;background:#1a2d50"></div>
<div class="t" style="left:273px;width:51px;text-align:right;top:611px;font-size:13px;font-weight:bold;color:#000;transform:scaleX(0.88);transform-origin:100% 50%">2</div>
<div class="t" style="left:470px;top:611px;font-size:13px;font-weight:bold;color:#000">See everything - read-only</div>
<div class="t" style="left:790px;top:611px;font-size:13px;font-weight:bold;color:#000">1 Assigned User</div>
<div class="a" style="left:1430px;top:603px;width:116px;height:26px;overflow:hidden"><div class="t" style="left:0;top:8px;font-size:13px;font-weight:bold;letter-spacing:-0.35px;color:#000">GLOBAL hybrid sygx2</div></div>
<div class="a" style="left:292px;top:630px;width:34px;height:28px;background:#c9dbea"></div>
<div class="a" style="left:292px;top:630px;width:1px;height:28px;background:#2b7fd6"></div>
<div class="a" style="left:328px;top:630px;width:1407px;height:28px;background:#ffffff"></div>
<div class="a" style="left:367px;top:630px;width:20px;height:28px;background:#d5d5d5"></div>
<div class="a" style="left:387px;top:630px;width:40px;height:28px;background:#d5d5d5"></div>
<div class="a" style="left:427px;top:630px;width:20px;height:28px;background:#d5d5d5"></div>
<div class="a" style="left:447px;top:630px;width:20px;height:28px;background:#d5d5d5"></div>
<div class="a" style="left:347px;top:630px;width:1px;height:28px;background:#f3f3f3"></div>
<div class="a" style="left:367px;top:630px;width:1px;height:28px;background:#f3f3f3"></div>
<div class="a" style="left:387px;top:630px;width:1px;height:28px;background:#f3f3f3"></div>
<div class="a" style="left:407px;top:630px;width:1px;height:28px;background:#f3f3f3"></div>
<div class="a" style="left:427px;top:630px;width:1px;height:28px;background:#f3f3f3"></div>
<div class="a" style="left:447px;top:630px;width:1px;height:28px;background:#f3f3f3"></div>
<div class="a" style="left:467px;top:630px;width:1px;height:28px;background:#f3f3f3"></div>
<div class="a" style="left:787px;top:630px;width:1px;height:28px;background:#f3f3f3"></div>
<div class="a" style="left:1427px;top:630px;width:1px;height:28px;background:#f3f3f3"></div>
<div class="a" style="left:1547px;top:630px;width:1px;height:28px;background:#f3f3f3"></div>
<div class="a" style="left:326px;top:630px;width:1px;height:28px;background:#2b7fd6"></div>
<div class="a" style="left:327px;top:630px;width:1px;height:28px;background:#1a2d50"></div>
<div class="t" style="left:292px;width:32px;text-align:right;top:639px;font-size:13px;font-weight:normal;color:#000;transform:scaleX(0.88);transform-origin:100% 50%">3</div>
<div class="t" style="left:470px;top:639px;font-size:13px;font-weight:normal;color:#000">Adele Vance</div>
<div class="t" style="left:790px;top:639px;font-size:13px;font-weight:normal;color:#000">For role: See everything - read-only :: Adele Vance - AdeleV@sygx2.onmicrosoft.com</div>
<div class="a" style="left:1430px;top:631px;width:116px;height:26px;overflow:hidden"><div class="t" style="left:0;top:8px;font-size:13px;font-weight:normal;letter-spacing:-0.1px;color:#000">GLOBAL hybrid sygx2</div></div>
<div class="t" style="left:1548px;width:184px;text-align:right;top:639px;font-size:13px;font-weight:normal;color:#000">8/27/2024 01:41 PM</div>
<div class="a" style="left:273px;top:658px;width:53px;height:28px;background:#bbcbdf"></div>
<div class="a" style="left:273px;top:658px;width:1px;height:28px;background:#2b7fd6"></div>
<div class="a" style="left:328px;top:658px;width:1407px;height:28px;background:#e5ebf6"></div>
<div class="a" style="left:367px;top:658px;width:20px;height:28px;background:#dde0e5"></div>
<div class="a" style="left:387px;top:658px;width:40px;height:28px;background:#dde0e5"></div>
<div class="a" style="left:427px;top:658px;width:20px;height:28px;background:#dde0e5"></div>
<div class="a" style="left:447px;top:658px;width:20px;height:28px;background:#dde0e5"></div>
<div class="a" style="left:1547px;top:658px;width:188px;height:28px;background:#dde0e5"></div>
<div class="a" style="left:347px;top:658px;width:1px;height:28px;background:#f2f5fa"></div>
<div class="a" style="left:367px;top:658px;width:1px;height:28px;background:#f2f5fa"></div>
<div class="a" style="left:387px;top:658px;width:1px;height:28px;background:#f2f5fa"></div>
<div class="a" style="left:407px;top:658px;width:1px;height:28px;background:#f2f5fa"></div>
<div class="a" style="left:427px;top:658px;width:1px;height:28px;background:#f2f5fa"></div>
<div class="a" style="left:447px;top:658px;width:1px;height:28px;background:#f2f5fa"></div>
<div class="a" style="left:467px;top:658px;width:1px;height:28px;background:#f2f5fa"></div>
<div class="a" style="left:787px;top:658px;width:1px;height:28px;background:#f2f5fa"></div>
<div class="a" style="left:1427px;top:658px;width:1px;height:28px;background:#f2f5fa"></div>
<div class="a" style="left:1547px;top:658px;width:1px;height:28px;background:#f2f5fa"></div>
<div class="a" style="left:326px;top:658px;width:1px;height:28px;background:#2b7fd6"></div>
<div class="a" style="left:327px;top:658px;width:1px;height:28px;background:#1a2d50"></div>
<div class="t" style="left:273px;width:51px;text-align:right;top:667px;font-size:13px;font-weight:bold;color:#000;transform:scaleX(0.88);transform-origin:100% 50%">2</div>
<div class="t" style="left:470px;top:667px;font-size:13px;font-weight:bold;color:#000">See everything - read-only</div>
<div class="t" style="left:790px;top:667px;font-size:13px;font-weight:bold;color:#000">1 Assigned Group</div>
<div class="a" style="left:1430px;top:659px;width:116px;height:26px;overflow:hidden"><div class="t" style="left:0;top:8px;font-size:13px;font-weight:bold;letter-spacing:-0.35px;color:#000">GLOBAL hybrid sygx2</div></div>
<div class="a" style="left:292px;top:686px;width:34px;height:28px;background:#c9dbea"></div>
<div class="a" style="left:292px;top:686px;width:1px;height:28px;background:#2b7fd6"></div>
<div class="a" style="left:328px;top:686px;width:1407px;height:28px;background:#ffffff"></div>
<div class="a" style="left:367px;top:686px;width:20px;height:28px;background:#d5d5d5"></div>
<div class="a" style="left:387px;top:686px;width:40px;height:28px;background:#d5d5d5"></div>
<div class="a" style="left:427px;top:686px;width:20px;height:28px;background:#d5d5d5"></div>
<div class="a" style="left:447px;top:686px;width:20px;height:28px;background:#d5d5d5"></div>
<div class="a" style="left:347px;top:686px;width:1px;height:28px;background:#f3f3f3"></div>
<div class="a" style="left:367px;top:686px;width:1px;height:28px;background:#f3f3f3"></div>
<div class="a" style="left:387px;top:686px;width:1px;height:28px;background:#f3f3f3"></div>
<div class="a" style="left:407px;top:686px;width:1px;height:28px;background:#f3f3f3"></div>
<div class="a" style="left:427px;top:686px;width:1px;height:28px;background:#f3f3f3"></div>
<div class="a" style="left:447px;top:686px;width:1px;height:28px;background:#f3f3f3"></div>
<div class="a" style="left:467px;top:686px;width:1px;height:28px;background:#f3f3f3"></div>
<div class="a" style="left:787px;top:686px;width:1px;height:28px;background:#f3f3f3"></div>
<div class="a" style="left:1427px;top:686px;width:1px;height:28px;background:#f3f3f3"></div>
<div class="a" style="left:1547px;top:686px;width:1px;height:28px;background:#f3f3f3"></div>
<div class="a" style="left:326px;top:686px;width:1px;height:28px;background:#2b7fd6"></div>
<div class="a" style="left:327px;top:686px;width:1px;height:28px;background:#1a2d50"></div>
<div class="t" style="left:292px;width:32px;text-align:right;top:695px;font-size:13px;font-weight:normal;color:#000;transform:scaleX(0.88);transform-origin:100% 50%">3</div>
<div class="t" style="left:470px;top:695px;font-size:13px;font-weight:normal;color:#000">Sales - sapio365 demo</div>
<div class="t" style="left:790px;top:695px;font-size:13px;font-weight:normal;color:#000">For role: See everything - read-only :: Sales - sapio365 demo</div>
<div class="a" style="left:1430px;top:687px;width:116px;height:26px;overflow:hidden"><div class="t" style="left:0;top:8px;font-size:13px;font-weight:normal;letter-spacing:-0.1px;color:#000">GLOBAL hybrid sygx2</div></div>
<div class="t" style="left:1548px;width:184px;text-align:right;top:695px;font-size:13px;font-weight:normal;color:#000">8/27/2024 01:57 PM</div>
<div class="a" style="left:273px;top:714px;width:53px;height:28px;background:#bbcbdf"></div>
<div class="a" style="left:273px;top:714px;width:1px;height:28px;background:#2b7fd6"></div>
<div class="a" style="left:328px;top:714px;width:1407px;height:28px;background:#e5ebf6"></div>
<div class="a" style="left:367px;top:714px;width:20px;height:28px;background:#dde0e5"></div>
<div class="a" style="left:387px;top:714px;width:40px;height:28px;background:#dde0e5"></div>
<div class="a" style="left:427px;top:714px;width:20px;height:28px;background:#dde0e5"></div>
<div class="a" style="left:447px;top:714px;width:20px;height:28px;background:#dde0e5"></div>
<div class="a" style="left:1547px;top:714px;width:188px;height:28px;background:#dde0e5"></div>
<div class="a" style="left:347px;top:714px;width:1px;height:28px;background:#f2f5fa"></div>
<div class="a" style="left:367px;top:714px;width:1px;height:28px;background:#f2f5fa"></div>
<div class="a" style="left:387px;top:714px;width:1px;height:28px;background:#f2f5fa"></div>
<div class="a" style="left:407px;top:714px;width:1px;height:28px;background:#f2f5fa"></div>
<div class="a" style="left:427px;top:714px;width:1px;height:28px;background:#f2f5fa"></div>
<div class="a" style="left:447px;top:714px;width:1px;height:28px;background:#f2f5fa"></div>
<div class="a" style="left:467px;top:714px;width:1px;height:28px;background:#f2f5fa"></div>
<div class="a" style="left:787px;top:714px;width:1px;height:28px;background:#f2f5fa"></div>
<div class="a" style="left:1427px;top:714px;width:1px;height:28px;background:#f2f5fa"></div>
<div class="a" style="left:1547px;top:714px;width:1px;height:28px;background:#f2f5fa"></div>
<div class="a" style="left:326px;top:714px;width:1px;height:28px;background:#2b7fd6"></div>
<div class="a" style="left:327px;top:714px;width:1px;height:28px;background:#1a2d50"></div>
<div class="t" style="left:273px;width:51px;text-align:right;top:723px;font-size:13px;font-weight:normal;color:#000;transform:scaleX(0.88);transform-origin:100% 50%">2</div>
<div class="t" style="left:470px;top:723px;font-size:13px;font-weight:normal;color:#000">See everything - read-only</div>
<div class="t" style="left:790px;top:723px;font-size:13px;font-weight:normal;color:#000">No License Delegation</div>
<div class="a" style="left:1430px;top:715px;width:116px;height:26px;overflow:hidden"><div class="t" style="left:0;top:8px;font-size:13px;font-weight:normal;letter-spacing:-0.1px;color:#000">GLOBAL hybrid sygx2</div></div>
<div class="a" style="left:254px;top:742px;width:72px;height:28px;background:#abbbd9"></div>
<div class="a" style="left:254px;top:742px;width:1px;height:28px;background:#2b7fd6"></div>
<div class="a" style="left:328px;top:742px;width:1407px;height:28px;background:#c5cfee"></div>
<div class="a" style="left:367px;top:742px;width:20px;height:28px;background:#cdd2e3"></div>
<div class="a" style="left:427px;top:742px;width:20px;height:28px;background:#cdd2e3"></div>
<div class="a" style="left:347px;top:742px;width:1px;height:28px;background:#e6eaf6"></div>
<div class="a" style="left:367px;top:742px;width:1px;height:28px;background:#e6eaf6"></div>
<div class="a" style="left:387px;top:742px;width:1px;height:28px;background:#e6eaf6"></div>
<div class="a" style="left:407px;top:742px;width:1px;height:28px;background:#e6eaf6"></div>
<div class="a" style="left:427px;top:742px;width:1px;height:28px;background:#e6eaf6"></div>
<div class="a" style="left:447px;top:742px;width:1px;height:28px;background:#e6eaf6"></div>
<div class="a" style="left:467px;top:742px;width:1px;height:28px;background:#e6eaf6"></div>
<div class="a" style="left:787px;top:742px;width:1px;height:28px;background:#e6eaf6"></div>
<div class="a" style="left:1427px;top:742px;width:1px;height:28px;background:#e6eaf6"></div>
<div class="a" style="left:1547px;top:742px;width:1px;height:28px;background:#e6eaf6"></div>
<div class="a" style="left:326px;top:742px;width:1px;height:28px;background:#2b7fd6"></div>
<div class="a" style="left:327px;top:742px;width:1px;height:28px;background:#1a2d50"></div>
<div class="t" style="left:254px;width:70px;text-align:right;top:751px;font-size:13px;font-weight:bold;color:#000;transform:scaleX(0.88);transform-origin:100% 50%">1</div>
<div class="t" style="left:470px;top:751px;font-size:13px;font-weight:bold;color:#000">Manage users in Production department</div>
<div class="t" style="left:790px;top:751px;font-size:13px;font-weight:bold;color:#000">Create, delete, edit users in the Production department - with ticketing on</div>
<div class="a" style="left:1430px;top:743px;width:116px;height:26px;overflow:hidden"><div class="t" style="left:0;top:8px;font-size:13px;font-weight:bold;letter-spacing:-0.35px;color:#000">GLOBAL hybrid sygx2</div></div>
<div class="t" style="left:1548px;width:184px;text-align:right;top:751px;font-size:13px;font-weight:bold;color:#000">8/27/2024 01:57 PM</div>
<div class="a" style="left:273px;top:770px;width:53px;height:28px;background:#bbcbdf"></div>
<div class="a" style="left:273px;top:770px;width:1px;height:28px;background:#2b7fd6"></div>
<div class="a" style="left:328px;top:770px;width:1407px;height:28px;background:#e5ebf6"></div>
<div class="a" style="left:367px;top:770px;width:20px;height:28px;background:#dde0e5"></div>
<div class="a" style="left:387px;top:770px;width:40px;height:28px;background:#dde0e5"></div>
<div class="a" style="left:427px;top:770px;width:20px;height:28px;background:#dde0e5"></div>
<div class="a" style="left:447px;top:770px;width:20px;height:28px;background:#dde0e5"></div>
<div class="a" style="left:1547px;top:770px;width:188px;height:28px;background:#dde0e5"></div>
<div class="a" style="left:347px;top:770px;width:1px;height:28px;background:#f2f5fa"></div>
<div class="a" style="left:367px;top:770px;width:1px;height:28px;background:#f2f5fa"></div>
<div class="a" style="left:387px;top:770px;width:1px;height:28px;background:#f2f5fa"></div>
<div class="a" style="left:407px;top:770px;width:1px;height:28px;background:#f2f5fa"></div>
<div class="a" style="left:427px;top:770px;width:1px;height:28px;background:#f2f5fa"></div>
<div class="a" style="left:447px;top:770px;width:1px;height:28px;background:#f2f5fa"></div>
<div class="a" style="left:467px;top:770px;width:1px;height:28px;background:#f2f5fa"></div>
<div class="a" style="left:787px;top:770px;width:1px;height:28px;background:#f2f5fa"></div>
<div class="a" style="left:1427px;top:770px;width:1px;height:28px;background:#f2f5fa"></div>
<div class="a" style="left:1547px;top:770px;width:1px;height:28px;background:#f2f5fa"></div>
<div class="a" style="left:326px;top:770px;width:1px;height:28px;background:#2b7fd6"></div>
<div class="a" style="left:327px;top:770px;width:1px;height:28px;background:#1a2d50"></div>
<div class="t" style="left:273px;width:51px;text-align:right;top:779px;font-size:13px;font-weight:bold;color:#000;transform:scaleX(0.88);transform-origin:100% 50%">2</div>
<div class="t" style="left:470px;top:779px;font-size:13px;font-weight:bold;color:#000">Manage users in Production department</div>
<div class="t" style="left:790px;top:779px;font-size:13px;font-weight:bold;color:#000">126 Permissions</div>
<div class="a" style="left:1430px;top:771px;width:116px;height:26px;overflow:hidden"><div class="t" style="left:0;top:8px;font-size:13px;font-weight:bold;letter-spacing:-0.35px;color:#000">GLOBAL hybrid sygx2</div></div>
<div class="a" style="left:273px;top:798px;width:53px;height:28px;background:#bbcbdf"></div>
<div class="a" style="left:273px;top:798px;width:1px;height:28px;background:#2b7fd6"></div>
<div class="a" style="left:328px;top:798px;width:1407px;height:28px;background:#e5ebf6"></div>
<div class="a" style="left:367px;top:798px;width:20px;height:28px;background:#dde0e5"></div>
<div class="a" style="left:387px;top:798px;width:40px;height:28px;background:#dde0e5"></div>
<div class="a" style="left:427px;top:798px;width:20px;height:28px;background:#dde0e5"></div>
<div class="a" style="left:447px;top:798px;width:20px;height:28px;background:#dde0e5"></div>
<div class="a" style="left:1547px;top:798px;width:188px;height:28px;background:#dde0e5"></div>
<div class="a" style="left:347px;top:798px;width:1px;height:28px;background:#f2f5fa"></div>
<div class="a" style="left:367px;top:798px;width:1px;height:28px;background:#f2f5fa"></div>
<div class="a" style="left:387px;top:798px;width:1px;height:28px;background:#f2f5fa"></div>
<div class="a" style="left:407px;top:798px;width:1px;height:28px;background:#f2f5fa"></div>
<div class="a" style="left:427px;top:798px;width:1px;height:28px;background:#f2f5fa"></div>
<div class="a" style="left:447px;top:798px;width:1px;height:28px;background:#f2f5fa"></div>
<div class="a" style="left:467px;top:798px;width:1px;height:28px;background:#f2f5fa"></div>
<div class="a" style="left:787px;top:798px;width:1px;height:28px;background:#f2f5fa"></div>
<div class="a" style="left:1427px;top:798px;width:1px;height:28px;background:#f2f5fa"></div>
<div class="a" style="left:1547px;top:798px;width:1px;height:28px;background:#f2f5fa"></div>
<div class="a" style="left:326px;top:798px;width:1px;height:28px;background:#2b7fd6"></div>
<div class="a" style="left:327px;top:798px;width:1px;height:28px;background:#1a2d50"></div>
<div class="t" style="left:273px;width:51px;text-align:right;top:807px;font-size:13px;font-weight:bold;color:#000;transform:scaleX(0.88);transform-origin:100% 50%">2</div>
<div class="t" style="left:470px;top:807px;font-size:13px;font-weight:bold;color:#000">Manage users in Production department</div>
<div class="t" style="left:790px;top:807px;font-size:13px;font-weight:bold;color:#000">1 Scope</div>
<div class="a" style="left:1430px;top:799px;width:116px;height:26px;overflow:hidden"><div class="t" style="left:0;top:8px;font-size:13px;font-weight:bold;letter-spacing:-0.35px;color:#000">GLOBAL hybrid sygx2</div></div>
<div class="a" style="left:292px;top:826px;width:34px;height:28px;background:#c9dbea"></div>
<div class="a" style="left:292px;top:826px;width:1px;height:28px;background:#2b7fd6"></div>
<div class="a" style="left:328px;top:826px;width:1407px;height:28px;background:#ffffff"></div>
<div class="a" style="left:387px;top:826px;width:40px;height:28px;background:#d5d5d5"></div>
<div class="a" style="left:427px;top:826px;width:20px;height:28px;background:#d5d5d5"></div>
<div class="a" style="left:447px;top:826px;width:20px;height:28px;background:#d5d5d5"></div>
<div class="a" style="left:347px;top:826px;width:1px;height:28px;background:#f3f3f3"></div>
<div class="a" style="left:367px;top:826px;width:1px;height:28px;background:#f3f3f3"></div>
<div class="a" style="left:387px;top:826px;width:1px;height:28px;background:#f3f3f3"></div>
<div class="a" style="left:407px;top:826px;width:1px;height:28px;background:#f3f3f3"></div>
<div class="a" style="left:427px;top:826px;width:1px;height:28px;background:#f3f3f3"></div>
<div class="a" style="left:447px;top:826px;width:1px;height:28px;background:#f3f3f3"></div>
<div class="a" style="left:467px;top:826px;width:1px;height:28px;background:#f3f3f3"></div>
<div class="a" style="left:787px;top:826px;width:1px;height:28px;background:#f3f3f3"></div>
<div class="a" style="left:1427px;top:826px;width:1px;height:28px;background:#f3f3f3"></div>
<div class="a" style="left:1547px;top:826px;width:1px;height:28px;background:#f3f3f3"></div>
<div class="a" style="left:326px;top:826px;width:1px;height:28px;background:#2b7fd6"></div>
<div class="a" style="left:327px;top:826px;width:1px;height:28px;background:#1a2d50"></div>
<div class="t" style="left:292px;width:32px;text-align:right;top:835px;font-size:13px;font-weight:normal;color:#000;transform:scaleX(0.88);transform-origin:100% 50%">3</div>
<div class="t" style="left:470px;top:835px;font-size:13px;font-weight:normal;color:#000">Users in Production department</div>
<div class="t" style="left:790px;top:835px;font-size:13px;font-weight:normal;color:#000">Department :: Equal :: 'Production'</div>
<div class="a" style="left:1430px;top:827px;width:116px;height:26px;overflow:hidden"><div class="t" style="left:0;top:8px;font-size:13px;font-weight:normal;letter-spacing:-0.1px;color:#000">GLOBAL hybrid sygx2</div></div>
<div class="t" style="left:1548px;width:184px;text-align:right;top:835px;font-size:13px;font-weight:normal;color:#000">8/27/2024 01:53 PM</div>
<div class="a" style="left:273px;top:854px;width:53px;height:28px;background:#bbcbdf"></div>
<div class="a" style="left:273px;top:854px;width:1px;height:28px;background:#2b7fd6"></div>
<div class="a" style="left:328px;top:854px;width:1407px;height:28px;background:#e5ebf6"></div>
<div class="a" style="left:367px;top:854px;width:20px;height:28px;background:#dde0e5"></div>
<div class="a" style="left:387px;top:854px;width:40px;height:28px;background:#dde0e5"></div>
<div class="a" style="left:427px;top:854px;width:20px;height:28px;background:#dde0e5"></div>
<div class="a" style="left:447px;top:854px;width:20px;height:28px;background:#dde0e5"></div>
<div class="a" style="left:1547px;top:854px;width:188px;height:28px;background:#dde0e5"></div>
<div class="a" style="left:347px;top:854px;width:1px;height:28px;background:#f2f5fa"></div>
<div class="a" style="left:367px;top:854px;width:1px;height:28px;background:#f2f5fa"></div>
<div class="a" style="left:387px;top:854px;width:1px;height:28px;background:#f2f5fa"></div>
<div class="a" style="left:407px;top:854px;width:1px;height:28px;background:#f2f5fa"></div>
<div class="a" style="left:427px;top:854px;width:1px;height:28px;background:#f2f5fa"></div>
<div class="a" style="left:447px;top:854px;width:1px;height:28px;background:#f2f5fa"></div>
<div class="a" style="left:467px;top:854px;width:1px;height:28px;background:#f2f5fa"></div>
<div class="a" style="left:787px;top:854px;width:1px;height:28px;background:#f2f5fa"></div>
<div class="a" style="left:1427px;top:854px;width:1px;height:28px;background:#f2f5fa"></div>
<div class="a" style="left:1547px;top:854px;width:1px;height:28px;background:#f2f5fa"></div>
<div class="a" style="left:326px;top:854px;width:1px;height:28px;background:#2b7fd6"></div>
<div class="a" style="left:327px;top:854px;width:1px;height:28px;background:#1a2d50"></div>
<div class="t" style="left:273px;width:51px;text-align:right;top:863px;font-size:13px;font-weight:normal;color:#000;transform:scaleX(0.88);transform-origin:100% 50%">2</div>
<div class="t" style="left:470px;top:863px;font-size:13px;font-weight:normal;color:#000">Manage users in Production department</div>
<div class="t" style="left:790px;top:863px;font-size:13px;font-weight:normal;color:#000">No Assigned User</div>
<div class="a" style="left:1430px;top:855px;width:116px;height:26px;overflow:hidden"><div class="t" style="left:0;top:8px;font-size:13px;font-weight:normal;letter-spacing:-0.1px;color:#000">GLOBAL hybrid sygx2</div></div>
<div class="a" style="left:273px;top:882px;width:53px;height:28px;background:#bbcbdf"></div>
<div class="a" style="left:273px;top:882px;width:1px;height:28px;background:#2b7fd6"></div>
<div class="a" style="left:328px;top:882px;width:1407px;height:28px;background:#e5ebf6"></div>
<div class="a" style="left:367px;top:882px;width:20px;height:28px;background:#dde0e5"></div>
<div class="a" style="left:387px;top:882px;width:40px;height:28px;background:#dde0e5"></div>
<div class="a" style="left:427px;top:882px;width:20px;height:28px;background:#dde0e5"></div>
<div class="a" style="left:447px;top:882px;width:20px;height:28px;background:#dde0e5"></div>
<div class="a" style="left:1547px;top:882px;width:188px;height:28px;background:#dde0e5"></div>
<div class="a" style="left:347px;top:882px;width:1px;height:28px;background:#f2f5fa"></div>
<div class="a" style="left:367px;top:882px;width:1px;height:28px;background:#f2f5fa"></div>
<div class="a" style="left:387px;top:882px;width:1px;height:28px;background:#f2f5fa"></div>
<div class="a" style="left:407px;top:882px;width:1px;height:28px;background:#f2f5fa"></div>
<div class="a" style="left:427px;top:882px;width:1px;height:28px;background:#f2f5fa"></div>
<div class="a" style="left:447px;top:882px;width:1px;height:28px;background:#f2f5fa"></div>
<div class="a" style="left:467px;top:882px;width:1px;height:28px;background:#f2f5fa"></div>
<div class="a" style="left:787px;top:882px;width:1px;height:28px;background:#f2f5fa"></div>
<div class="a" style="left:1427px;top:882px;width:1px;height:28px;background:#f2f5fa"></div>
<div class="a" style="left:1547px;top:882px;width:1px;height:28px;background:#f2f5fa"></div>
<div class="a" style="left:326px;top:882px;width:1px;height:28px;background:#2b7fd6"></div>
<div class="a" style="left:327px;top:882px;width:1px;height:28px;background:#1a2d50"></div>
<div class="t" style="left:273px;width:51px;text-align:right;top:891px;font-size:13px;font-weight:bold;color:#000;transform:scaleX(0.88);transform-origin:100% 50%">2</div>
<div class="t" style="left:470px;top:891px;font-size:13px;font-weight:bold;color:#000">Manage users in Production department</div>
<div class="t" style="left:790px;top:891px;font-size:13px;font-weight:bold;color:#000">1 Assigned Group</div>
<div class="a" style="left:1430px;top:883px;width:116px;height:26px;overflow:hidden"><div class="t" style="left:0;top:8px;font-size:13px;font-weight:bold;letter-spacing:-0.35px;color:#000">GLOBAL hybrid sygx2</div></div>
<div class="a" style="left:292px;top:910px;width:34px;height:28px;background:#c9dbea"></div>
<div class="a" style="left:292px;top:910px;width:1px;height:28px;background:#2b7fd6"></div>
<div class="a" style="left:328px;top:910px;width:1407px;height:28px;background:#ffffff"></div>
<div class="a" style="left:367px;top:910px;width:20px;height:28px;background:#d5d5d5"></div>
<div class="a" style="left:387px;top:910px;width:40px;height:28px;background:#d5d5d5"></div>
<div class="a" style="left:427px;top:910px;width:20px;height:28px;background:#d5d5d5"></div>
<div class="a" style="left:447px;top:910px;width:20px;height:28px;background:#d5d5d5"></div>
<div class="a" style="left:347px;top:910px;width:1px;height:28px;background:#f3f3f3"></div>
<div class="a" style="left:367px;top:910px;width:1px;height:28px;background:#f3f3f3"></div>
<div class="a" style="left:387px;top:910px;width:1px;height:28px;background:#f3f3f3"></div>
<div class="a" style="left:407px;top:910px;width:1px;height:28px;background:#f3f3f3"></div>
<div class="a" style="left:427px;top:910px;width:1px;height:28px;background:#f3f3f3"></div>
<div class="a" style="left:447px;top:910px;width:1px;height:28px;background:#f3f3f3"></div>
<div class="a" style="left:467px;top:910px;width:1px;height:28px;background:#f3f3f3"></div>
<div class="a" style="left:787px;top:910px;width:1px;height:28px;background:#f3f3f3"></div>
<div class="a" style="left:1427px;top:910px;width:1px;height:28px;background:#f3f3f3"></div>
<div class="a" style="left:1547px;top:910px;width:1px;height:28px;background:#f3f3f3"></div>
<div class="a" style="left:326px;top:910px;width:1px;height:28px;background:#2b7fd6"></div>
<div class="a" style="left:327px;top:910px;width:1px;height:28px;background:#1a2d50"></div>
<div class="t" style="left:292px;width:32px;text-align:right;top:919px;font-size:13px;font-weight:normal;color:#000;transform:scaleX(0.88);transform-origin:100% 50%">3</div>
<div class="t" style="left:470px;top:919px;font-size:13px;font-weight:normal;color:#000">Sales - sapio365 demo</div>
<div class="t" style="left:790px;top:919px;font-size:13px;font-weight:normal;color:#000">For role: Manage users in Production department :: Sales - sapio365 demo</div>
<div class="a" style="left:1430px;top:911px;width:116px;height:26px;overflow:hidden"><div class="t" style="left:0;top:8px;font-size:13px;font-weight:normal;letter-spacing:-0.1px;color:#000">GLOBAL hybrid sygx2</div></div>
<div class="t" style="left:1548px;width:184px;text-align:right;top:919px;font-size:13px;font-weight:normal;color:#000">8/27/2024 01:57 PM</div>
<div class="a" style="left:273px;top:938px;width:53px;height:28px;background:#bbcbdf"></div>
<div class="a" style="left:273px;top:938px;width:1px;height:28px;background:#2b7fd6"></div>
<div class="a" style="left:328px;top:938px;width:1407px;height:28px;background:#e5ebf6"></div>
<div class="a" style="left:367px;top:938px;width:20px;height:28px;background:#dde0e5"></div>
<div class="a" style="left:387px;top:938px;width:40px;height:28px;background:#dde0e5"></div>
<div class="a" style="left:427px;top:938px;width:20px;height:28px;background:#dde0e5"></div>
<div class="a" style="left:447px;top:938px;width:20px;height:28px;background:#dde0e5"></div>
<div class="a" style="left:1547px;top:938px;width:188px;height:28px;background:#dde0e5"></div>
<div class="a" style="left:347px;top:938px;width:1px;height:28px;background:#f2f5fa"></div>
<div class="a" style="left:367px;top:938px;width:1px;height:28px;background:#f2f5fa"></div>
<div class="a" style="left:387px;top:938px;width:1px;height:28px;background:#f2f5fa"></div>
<div class="a" style="left:407px;top:938px;width:1px;height:28px;background:#f2f5fa"></div>
<div class="a" style="left:427px;top:938px;width:1px;height:28px;background:#f2f5fa"></div>
<div class="a" style="left:447px;top:938px;width:1px;height:28px;background:#f2f5fa"></div>
<div class="a" style="left:467px;top:938px;width:1px;height:28px;background:#f2f5fa"></div>
<div class="a" style="left:787px;top:938px;width:1px;height:28px;background:#f2f5fa"></div>
<div class="a" style="left:1427px;top:938px;width:1px;height:28px;background:#f2f5fa"></div>
<div class="a" style="left:1547px;top:938px;width:1px;height:28px;background:#f2f5fa"></div>
<div class="a" style="left:326px;top:938px;width:1px;height:28px;background:#2b7fd6"></div>
<div class="a" style="left:327px;top:938px;width:1px;height:28px;background:#1a2d50"></div>
<div class="t" style="left:273px;width:51px;text-align:right;top:947px;font-size:13px;font-weight:normal;color:#000;transform:scaleX(0.88);transform-origin:100% 50%">2</div>
<div class="t" style="left:470px;top:947px;font-size:13px;font-weight:normal;color:#000">Manage users in Production department</div>
<div class="t" style="left:790px;top:947px;font-size:13px;font-weight:normal;color:#000">No License Delegation</div>
<div class="a" style="left:1430px;top:939px;width:116px;height:26px;overflow:hidden"><div class="t" style="left:0;top:8px;font-size:13px;font-weight:normal;letter-spacing:-0.1px;color:#000">GLOBAL hybrid sygx2</div></div>
<svg style="left:0;top:0" width="1920" height="1080"><rect x="259" y="273" width="16" height="16" fill="#fff"/><rect x="260" y="274" width="14" height="14" fill="#2e3d56"/><rect x="262" y="280" width="10" height="2" fill="#fff"/><rect x="266" y="276" width="2" height="10" fill="#fff"/><rect x="330" y="272" width="16" height="16" fill="#fff"/><circle cx="338" cy="280" r="6.05" fill="none" stroke="#787878" stroke-width="1.5"/><circle cx="338" cy="280" r="2.8" fill="#9a9a9a"/><path transform="translate(349.5,272)" d="M1 2.5 Q1 1 2.5 1 L9 1 L15.5 7.5 Q16.2 8.2 15.5 9 L9.5 15 Q8.8 15.7 8 15 L1 8 Z" fill="#e9b056" stroke="#fff" stroke-width="0.8" /><circle cx="354.0" cy="276.5" r="1.3" fill="#fff"/><rect x="390" y="272" width="16" height="16" fill="#fff"/><g shape-rendering="crispEdges"><rect x="391" y="273" width="14" height="1" fill="#2e6db4"/><rect x="391" y="276" width="14" height="1" fill="#2e6db4"/><rect x="391" y="273" width="1" height="4" fill="#2e6db4"/><rect x="404" y="273" width="1" height="4" fill="#2e6db4"/><rect x="394" y="273" width="1" height="4" fill="#2e6db4"/><rect x="391" y="278" width="14" height="1" fill="#2e6db4"/><rect x="391" y="278" width="1" height="4" fill="#2e6db4"/><rect x="394" y="278" width="1" height="4" fill="#2e6db4"/><rect x="391" y="281" width="7" height="1" fill="#2e6db4"/><rect x="391" y="283" width="7" height="1" fill="#2e6db4"/><rect x="391" y="283" width="1" height="4" fill="#2e6db4"/><rect x="394" y="283" width="1" height="4" fill="#2e6db4"/><rect x="391" y="286" width="7" height="1" fill="#2e6db4"/><rect x="399" y="280" width="6" height="7" fill="#fff"/><rect x="399" y="280" width="6" height="1" fill="#555"/><rect x="399" y="286" width="6" height="1" fill="#555"/><rect x="399" y="280" width="1" height="7" fill="#555"/><rect x="404" y="280" width="1" height="7" fill="#555"/><rect x="401" y="282" width="2" height="1" fill="#555"/><rect x="401" y="284" width="2" height="1" fill="#555"/></g><rect x="409" y="273" width="17" height="15" fill="#fff"/><g shape-rendering="crispEdges"><rect x="410" y="274" width="3" height="11" fill="#22a884"/><rect x="414" y="274" width="3" height="11" fill="#2e6db4"/><rect x="418" y="274" width="3" height="5" fill="#e84c4c"/><rect x="422" y="274" width="3" height="5" fill="#e8a040"/><rect x="419" y="280" width="6" height="7" fill="#fff"/><rect x="419" y="280" width="6" height="1" fill="#555"/><rect x="419" y="286" width="6" height="1" fill="#555"/><rect x="419" y="280" width="1" height="7" fill="#555"/><rect x="424" y="280" width="1" height="7" fill="#555"/><rect x="421" y="282" width="2" height="1" fill="#555"/><rect x="421" y="284" width="2" height="1" fill="#555"/></g><rect x="259" y="301" width="16" height="16" fill="#fff"/><rect x="260" y="302" width="14" height="14" fill="#2e3d56"/><rect x="262" y="308" width="10" height="2" fill="#fff"/><rect x="330" y="300" width="16" height="16" fill="#fff"/><circle cx="338" cy="308" r="6.05" fill="none" stroke="#787878" stroke-width="1.5"/><circle cx="338" cy="308" r="2.8" fill="#9a9a9a"/><path transform="translate(349.5,300)" d="M1 2.5 Q1 1 2.5 1 L9 1 L15.5 7.5 Q16.2 8.2 15.5 9 L9.5 15 Q8.8 15.7 8 15 L1 8 Z" fill="#e9b056" stroke="#fff" stroke-width="0.8" /><circle cx="354.0" cy="304.5" r="1.3" fill="#fff"/><rect x="390" y="300" width="16" height="16" fill="#fff"/><g shape-rendering="crispEdges"><rect x="391" y="301" width="14" height="1" fill="#2e6db4"/><rect x="391" y="304" width="14" height="1" fill="#2e6db4"/><rect x="391" y="301" width="1" height="4" fill="#2e6db4"/><rect x="404" y="301" width="1" height="4" fill="#2e6db4"/><rect x="394" y="301" width="1" height="4" fill="#2e6db4"/><rect x="391" y="306" width="14" height="1" fill="#2e6db4"/><rect x="391" y="306" width="1" height="4" fill="#2e6db4"/><rect x="394" y="306" width="1" height="4" fill="#2e6db4"/><rect x="391" y="309" width="7" height="1" fill="#2e6db4"/><rect x="391" y="311" width="7" height="1" fill="#2e6db4"/><rect x="391" y="311" width="1" height="4" fill="#2e6db4"/><rect x="394" y="311" width="1" height="4" fill="#2e6db4"/><rect x="391" y="314" width="7" height="1" fill="#2e6db4"/><rect x="399" y="308" width="6" height="7" fill="#fff"/><rect x="399" y="308" width="6" height="1" fill="#555"/><rect x="399" y="314" width="6" height="1" fill="#555"/><rect x="399" y="308" width="1" height="7" fill="#555"/><rect x="404" y="308" width="1" height="7" fill="#555"/><rect x="401" y="310" width="2" height="1" fill="#555"/><rect x="401" y="312" width="2" height="1" fill="#555"/></g><rect x="409" y="301" width="17" height="15" fill="#fff"/><g shape-rendering="crispEdges"><rect x="410" y="302" width="3" height="11" fill="#22a884"/><rect x="414" y="302" width="3" height="11" fill="#2e6db4"/><rect x="418" y="302" width="3" height="5" fill="#e84c4c"/><rect x="422" y="302" width="3" height="5" fill="#e8a040"/><rect x="419" y="308" width="6" height="7" fill="#fff"/><rect x="419" y="308" width="6" height="1" fill="#555"/><rect x="419" y="314" width="6" height="1" fill="#555"/><rect x="419" y="308" width="1" height="7" fill="#555"/><rect x="424" y="308" width="1" height="7" fill="#555"/><rect x="421" y="310" width="2" height="1" fill="#555"/><rect x="421" y="312" width="2" height="1" fill="#555"/></g><rect x="278" y="329" width="16" height="16" fill="#fff"/><rect x="279" y="330" width="14" height="14" fill="#2e3d56"/><rect x="281" y="336" width="10" height="2" fill="#fff"/><rect x="285" y="332" width="2" height="10" fill="#fff"/><rect x="330" y="328" width="16" height="16" fill="#fff"/><circle cx="338" cy="336" r="6.05" fill="none" stroke="#787878" stroke-width="1.5"/><circle cx="338" cy="336" r="2.8" fill="#9a9a9a"/><g transform="translate(349.5,328)"><path d="M4.5 8 V5 Q4.5 1.5 8 1.5 Q11.5 1.5 11.5 4.5" fill="none" stroke="#1e9a63" stroke-width="2"/><rect x="2.5" y="8" width="11" height="7.5" fill="#1e9a63"/><rect x="7.3" y="10.5" width="1.5" height="2.5" fill="#fff"/></g><rect x="278" y="357" width="16" height="16" fill="#fff"/><rect x="279" y="358" width="14" height="14" fill="#2e3d56"/><rect x="281" y="364" width="10" height="2" fill="#fff"/><rect x="330" y="356" width="16" height="16" fill="#fff"/><circle cx="338" cy="364" r="6.05" fill="none" stroke="#787878" stroke-width="1.5"/><circle cx="338" cy="364" r="2.8" fill="#9a9a9a"/><circle cx="358.5" cy="363.5" r="6.9" fill="#fff" opacity="0.85"/><circle cx="358.5" cy="363.5" r="5.7" fill="#fff" stroke="#747474" stroke-width="1.5"/><path d="M358.5 356.1 V359.9 M358.5 367.1 V370.9 M351.1 363.5 H354.9 M362.1 363.5 H365.9" stroke="#747474" stroke-width="1.3"/><path d="M358.5 360.9 Q359.1 362.9 361.1 363.5 Q359.1 364.1 358.5 366.1 Q357.9 364.1 355.9 363.5 Q357.9 362.9 358.5 360.9 Z" fill="#2e6db4" stroke="#2e6db4" stroke-width="0.6"/><circle cx="338" cy="392" r="6.05" fill="none" stroke="#787878" stroke-width="1.5"/><circle cx="338" cy="392" r="2.8" fill="#9a9a9a"/><circle cx="358.5" cy="391.5" r="6.9" fill="#fff" opacity="0.85"/><circle cx="358.5" cy="391.5" r="5.7" fill="#fff" stroke="#747474" stroke-width="1.5"/><path d="M358.5 384.1 V387.9 M358.5 395.1 V398.9 M351.1 391.5 H354.9 M362.1 391.5 H365.9" stroke="#747474" stroke-width="1.3"/><path d="M358.5 388.9 Q359.1 390.9 361.1 391.5 Q359.1 392.1 358.5 394.1 Q357.9 392.1 355.9 391.5 Q357.9 390.9 358.5 388.9 Z" fill="#2e6db4" stroke="#2e6db4" stroke-width="0.6"/><circle cx="377.8" cy="388.3" r="4.3" fill="#2a7fbf"/><path d="M370.8 398 V396.5 Q370.8 393.6 374.5 393.6 L381.1 393.6 Q384.8 393.6 384.8 396.5 V398 Z" fill="#2a7fbf"/><rect x="278" y="413" width="16" height="16" fill="#fff"/><rect x="279" y="414" width="14" height="14" fill="#2e3d56"/><rect x="281" y="420" width="10" height="2" fill="#fff"/><rect x="330" y="412" width="16" height="16" fill="#fff"/><circle cx="338" cy="420" r="6.05" fill="none" stroke="#787878" stroke-width="1.5"/><circle cx="338" cy="420" r="2.8" fill="#9a9a9a"/><circle cx="357.8" cy="416.3" r="4.3" fill="#2a7fbf"/><path d="M350.8 426 V424.5 Q350.8 421.6 354.5 421.6 L361.1 421.6 Q364.8 421.6 364.8 424.5 V426 Z" fill="#2a7fbf"/><circle cx="338" cy="448" r="6.05" fill="none" stroke="#787878" stroke-width="1.5"/><circle cx="338" cy="448" r="2.8" fill="#9a9a9a"/><circle cx="357.8" cy="444.3" r="4.3" fill="#2a7fbf"/><path d="M350.8 454 V452.5 Q350.8 449.6 354.5 449.6 L361.1 449.6 Q364.8 449.6 364.8 452.5 V454 Z" fill="#2a7fbf"/><rect x="279.5" y="470.5" width="13" height="13" fill="none" stroke="#f4f6fa" stroke-width="1.5"/><path d="M280 483 L292 471" stroke="#f4f6fa" stroke-width="1"/><rect x="330" y="468" width="16" height="16" fill="#fff"/><circle cx="338" cy="476" r="6.05" fill="none" stroke="#787878" stroke-width="1.5"/><circle cx="338" cy="476" r="2.8" fill="#9a9a9a"/><circle cx="360.7" cy="472.8" r="2.3" fill="#2a7fbf" stroke="#fff" stroke-width="0.7"/><path d="M358.7 479.5 V477.8 Q358.7 475.7 360.9 475.7 H362.7 Q364.9 475.7 364.9 477.8 V479.5 Z" fill="#2a7fbf" stroke="#fff" stroke-width="0.7"/><circle cx="354.5" cy="474.4" r="2.6" fill="#2a7fbf" stroke="#fff" stroke-width="0.8"/><path d="M351.0 481.5 V479.5 Q351.0 477.1 353.5 477.1 H356.3 Q358.9 477.1 358.9 479.5 V481.5 Z" fill="#2a7fbf" stroke="#fff" stroke-width="0.8"/><rect x="279.5" y="498.5" width="13" height="13" fill="none" stroke="#f4f6fa" stroke-width="1.5"/><path d="M280 511 L292 499" stroke="#f4f6fa" stroke-width="1"/><rect x="330" y="496" width="16" height="16" fill="#fff"/><circle cx="338" cy="504" r="6.05" fill="none" stroke="#787878" stroke-width="1.5"/><circle cx="338" cy="504" r="2.8" fill="#9a9a9a"/><rect x="351.0" y="499.5" width="13" height="9" fill="#fff" stroke="#555" stroke-width="1.1"/><path d="M353.5 504 H358.5" stroke="#2a6db3" stroke-width="1.6"/><circle cx="360.5" cy="504" r="1.7" fill="none" stroke="#2a6db3" stroke-width="1.3"/><rect x="259" y="525" width="16" height="16" fill="#fff"/><rect x="260" y="526" width="14" height="14" fill="#2e3d56"/><rect x="262" y="532" width="10" height="2" fill="#fff"/><path transform="translate(349.5,524)" d="M1 2.5 Q1 1 2.5 1 L9 1 L15.5 7.5 Q16.2 8.2 15.5 9 L9.5 15 Q8.8 15.7 8 15 L1 8 Z" fill="#e9b056" stroke="#fff" stroke-width="0.8" /><circle cx="354.0" cy="528.5" r="1.3" fill="#fff"/><rect x="390" y="524" width="16" height="16" fill="#fff"/><g shape-rendering="crispEdges"><rect x="391" y="525" width="14" height="1" fill="#2e6db4"/><rect x="391" y="528" width="14" height="1" fill="#2e6db4"/><rect x="391" y="525" width="1" height="4" fill="#2e6db4"/><rect x="404" y="525" width="1" height="4" fill="#2e6db4"/><rect x="394" y="525" width="1" height="4" fill="#2e6db4"/><rect x="391" y="530" width="14" height="1" fill="#2e6db4"/><rect x="391" y="530" width="1" height="4" fill="#2e6db4"/><rect x="394" y="530" width="1" height="4" fill="#2e6db4"/><rect x="391" y="533" width="7" height="1" fill="#2e6db4"/><rect x="391" y="535" width="7" height="1" fill="#2e6db4"/><rect x="391" y="535" width="1" height="4" fill="#2e6db4"/><rect x="394" y="535" width="1" height="4" fill="#2e6db4"/><rect x="391" y="538" width="7" height="1" fill="#2e6db4"/><rect x="399" y="532" width="6" height="7" fill="#fff"/><rect x="399" y="532" width="6" height="1" fill="#555"/><rect x="399" y="538" width="6" height="1" fill="#555"/><rect x="399" y="532" width="1" height="7" fill="#555"/><rect x="404" y="532" width="1" height="7" fill="#555"/><rect x="401" y="534" width="2" height="1" fill="#555"/><rect x="401" y="536" width="2" height="1" fill="#555"/></g><rect x="409" y="525" width="17" height="15" fill="#fff"/><g shape-rendering="crispEdges"><rect x="410" y="526" width="3" height="11" fill="#22a884"/><rect x="414" y="526" width="3" height="11" fill="#2e6db4"/><rect x="418" y="526" width="3" height="5" fill="#e84c4c"/><rect x="422" y="526" width="3" height="5" fill="#e8a040"/><rect x="419" y="532" width="6" height="7" fill="#fff"/><rect x="419" y="532" width="6" height="1" fill="#555"/><rect x="419" y="538" width="6" height="1" fill="#555"/><rect x="419" y="532" width="1" height="7" fill="#555"/><rect x="424" y="532" width="1" height="7" fill="#555"/><rect x="421" y="534" width="2" height="1" fill="#555"/><rect x="421" y="536" width="2" height="1" fill="#555"/></g><rect x="278" y="553" width="16" height="16" fill="#fff"/><rect x="279" y="554" width="14" height="14" fill="#2e3d56"/><rect x="281" y="560" width="10" height="2" fill="#fff"/><rect x="285" y="556" width="2" height="10" fill="#fff"/><g transform="translate(349.5,552)"><path d="M4.5 8 V5 Q4.5 1.5 8 1.5 Q11.5 1.5 11.5 4.5" fill="none" stroke="#1e9a63" stroke-width="2"/><rect x="2.5" y="8" width="11" height="7.5" fill="#1e9a63"/><rect x="7.3" y="10.5" width="1.5" height="2.5" fill="#fff"/></g><rect x="278" y="581" width="16" height="16" fill="#fff"/><rect x="279" y="582" width="14" height="14" fill="#2e3d56"/><rect x="281" y="588" width="10" height="2" fill="#fff"/><rect x="285" y="584" width="2" height="10" fill="#fff"/><circle cx="358.5" cy="587.5" r="6.9" fill="#fff" opacity="0.85"/><circle cx="358.5" cy="587.5" r="5.7" fill="#fff" stroke="#747474" stroke-width="1.5"/><path d="M358.5 580.1 V583.9 M358.5 591.1 V594.9 M351.1 587.5 H354.9 M362.1 587.5 H365.9" stroke="#747474" stroke-width="1.3"/><path d="M358.5 584.9 Q359.1 586.9 361.1 587.5 Q359.1 588.1 358.5 590.1 Q357.9 588.1 355.9 587.5 Q357.9 586.9 358.5 584.9 Z" fill="#2e6db4" stroke="#2e6db4" stroke-width="0.6"/><rect x="278" y="609" width="16" height="16" fill="#fff"/><rect x="279" y="610" width="14" height="14" fill="#2e3d56"/><rect x="281" y="616" width="10" height="2" fill="#fff"/><circle cx="357.8" cy="612.3" r="4.3" fill="#2a7fbf"/><path d="M350.8 622 V620.5 Q350.8 617.6 354.5 617.6 L361.1 617.6 Q364.8 617.6 364.8 620.5 V622 Z" fill="#2a7fbf"/><circle cx="357.8" cy="640.3" r="4.3" fill="#2a7fbf"/><path d="M350.8 650 V648.5 Q350.8 645.6 354.5 645.6 L361.1 645.6 Q364.8 645.6 364.8 648.5 V650 Z" fill="#2a7fbf"/><rect x="278" y="665" width="16" height="16" fill="#fff"/><rect x="279" y="666" width="14" height="14" fill="#2e3d56"/><rect x="281" y="672" width="10" height="2" fill="#fff"/><circle cx="360.7" cy="668.8" r="2.3" fill="#2a7fbf" stroke="#fff" stroke-width="0.7"/><path d="M358.7 675.5 V673.8 Q358.7 671.7 360.9 671.7 H362.7 Q364.9 671.7 364.9 673.8 V675.5 Z" fill="#2a7fbf" stroke="#fff" stroke-width="0.7"/><circle cx="354.5" cy="670.4" r="2.6" fill="#2a7fbf" stroke="#fff" stroke-width="0.8"/><path d="M351.0 677.5 V675.5 Q351.0 673.1 353.5 673.1 H356.3 Q358.9 673.1 358.9 675.5 V677.5 Z" fill="#2a7fbf" stroke="#fff" stroke-width="0.8"/><circle cx="360.7" cy="696.8" r="2.3" fill="#2a7fbf" stroke="#fff" stroke-width="0.7"/><path d="M358.7 703.5 V701.8 Q358.7 699.7 360.9 699.7 H362.7 Q364.9 699.7 364.9 701.8 V703.5 Z" fill="#2a7fbf" stroke="#fff" stroke-width="0.7"/><circle cx="354.5" cy="698.4" r="2.6" fill="#2a7fbf" stroke="#fff" stroke-width="0.8"/><path d="M351.0 705.5 V703.5 Q351.0 701.1 353.5 701.1 H356.3 Q358.9 701.1 358.9 703.5 V705.5 Z" fill="#2a7fbf" stroke="#fff" stroke-width="0.8"/><rect x="279.5" y="722.5" width="13" height="13" fill="none" stroke="#f4f6fa" stroke-width="1.5"/><path d="M280 735 L292 723" stroke="#f4f6fa" stroke-width="1"/><rect x="351.0" y="723.5" width="13" height="9" fill="#fff" stroke="#555" stroke-width="1.1"/><path d="M353.5 728 H358.5" stroke="#2a6db3" stroke-width="1.6"/><circle cx="360.5" cy="728" r="1.7" fill="none" stroke="#2a6db3" stroke-width="1.3"/><rect x="259" y="749" width="16" height="16" fill="#fff"/><rect x="260" y="750" width="14" height="14" fill="#2e3d56"/><rect x="262" y="756" width="10" height="2" fill="#fff"/><path transform="translate(349.5,748)" d="M1 2.5 Q1 1 2.5 1 L9 1 L15.5 7.5 Q16.2 8.2 15.5 9 L9.5 15 Q8.8 15.7 8 15 L1 8 Z" fill="#e9b056" stroke="#fff" stroke-width="0.8" /><circle cx="354.0" cy="752.5" r="1.3" fill="#fff"/><rect x="390" y="748" width="16" height="16" fill="#fff"/><g shape-rendering="crispEdges"><rect x="391" y="749" width="14" height="1" fill="#2e6db4"/><rect x="391" y="752" width="14" height="1" fill="#2e6db4"/><rect x="391" y="749" width="1" height="4" fill="#2e6db4"/><rect x="404" y="749" width="1" height="4" fill="#2e6db4"/><rect x="394" y="749" width="1" height="4" fill="#2e6db4"/><rect x="391" y="754" width="14" height="1" fill="#2e6db4"/><rect x="391" y="754" width="1" height="4" fill="#2e6db4"/><rect x="394" y="754" width="1" height="4" fill="#2e6db4"/><rect x="391" y="757" width="7" height="1" fill="#2e6db4"/><rect x="391" y="759" width="7" height="1" fill="#2e6db4"/><rect x="391" y="759" width="1" height="4" fill="#2e6db4"/><rect x="394" y="759" width="1" height="4" fill="#2e6db4"/><rect x="391" y="762" width="7" height="1" fill="#2e6db4"/><rect x="399" y="756" width="6" height="7" fill="#fff"/><rect x="399" y="756" width="6" height="1" fill="#555"/><rect x="399" y="762" width="6" height="1" fill="#555"/><rect x="399" y="756" width="1" height="7" fill="#555"/><rect x="404" y="756" width="1" height="7" fill="#555"/><rect x="401" y="758" width="2" height="1" fill="#555"/><rect x="401" y="760" width="2" height="1" fill="#555"/></g><rect x="409" y="749" width="17" height="15" fill="#fff"/><g shape-rendering="crispEdges"><rect x="410" y="750" width="3" height="11" fill="#22a884"/><rect x="414" y="750" width="3" height="11" fill="#2e6db4"/><rect x="418" y="750" width="3" height="5" fill="#e84c4c"/><rect x="422" y="750" width="3" height="5" fill="#e8a040"/><rect x="419" y="756" width="6" height="7" fill="#fff"/><rect x="419" y="756" width="6" height="1" fill="#555"/><rect x="419" y="762" width="6" height="1" fill="#555"/><rect x="419" y="756" width="1" height="7" fill="#555"/><rect x="424" y="756" width="1" height="7" fill="#555"/><rect x="421" y="758" width="2" height="1" fill="#555"/><rect x="421" y="760" width="2" height="1" fill="#555"/></g><path transform="translate(450.1,749.4)" d="M1.5 0.7 H12.9 Q14.6 0.7 14.5 2.2 Q14.6 3.8 13.2 4.8 Q12 5.8 13.2 6.8 Q14.6 7.8 14.5 9.5 Q14.6 11 12.9 11 H1.5 Q0 11 0.1 9.5 Q0 7.8 1.4 6.8 Q2.6 5.8 1.4 4.8 Q0 3.8 0.1 2.2 Q0 0.7 1.5 0.7 Z" fill="#fff" stroke="#444" stroke-width="1.3"/><path d="M455.2 753.9 H460.8 M458.0 753.9 V758.8" stroke="#000" stroke-width="1.8"/><rect x="278" y="777" width="16" height="16" fill="#fff"/><rect x="279" y="778" width="14" height="14" fill="#2e3d56"/><rect x="281" y="784" width="10" height="2" fill="#fff"/><rect x="285" y="780" width="2" height="10" fill="#fff"/><g transform="translate(349.5,776)"><path d="M4.5 8 V5 Q4.5 1.5 8 1.5 Q11.5 1.5 11.5 4.5" fill="none" stroke="#1e9a63" stroke-width="2"/><rect x="2.5" y="8" width="11" height="7.5" fill="#1e9a63"/><rect x="7.3" y="10.5" width="1.5" height="2.5" fill="#fff"/></g><rect x="278" y="805" width="16" height="16" fill="#fff"/><rect x="279" y="806" width="14" height="14" fill="#2e3d56"/><rect x="281" y="812" width="10" height="2" fill="#fff"/><circle cx="358.5" cy="811.5" r="6.9" fill="#fff" opacity="0.85"/><circle cx="358.5" cy="811.5" r="5.7" fill="#fff" stroke="#747474" stroke-width="1.5"/><path d="M358.5 804.1 V807.9 M358.5 815.1 V818.9 M351.1 811.5 H354.9 M362.1 811.5 H365.9" stroke="#747474" stroke-width="1.3"/><path d="M358.5 808.9 Q359.1 810.9 361.1 811.5 Q359.1 812.1 358.5 814.1 Q357.9 812.1 355.9 811.5 Q357.9 810.9 358.5 808.9 Z" fill="#2e6db4" stroke="#2e6db4" stroke-width="0.6"/><circle cx="358.5" cy="839.5" r="6.9" fill="#fff" opacity="0.85"/><circle cx="358.5" cy="839.5" r="5.7" fill="#fff" stroke="#747474" stroke-width="1.5"/><path d="M358.5 832.1 V835.9 M358.5 843.1 V846.9 M351.1 839.5 H354.9 M362.1 839.5 H365.9" stroke="#747474" stroke-width="1.3"/><path d="M358.5 836.9 Q359.1 838.9 361.1 839.5 Q359.1 840.1 358.5 842.1 Q357.9 840.1 355.9 839.5 Q357.9 838.9 358.5 836.9 Z" fill="#2e6db4" stroke="#2e6db4" stroke-width="0.6"/><circle cx="377.8" cy="836.3" r="4.3" fill="#2a7fbf"/><path d="M370.8 846 V844.5 Q370.8 841.6 374.5 841.6 L381.1 841.6 Q384.8 841.6 384.8 844.5 V846 Z" fill="#2a7fbf"/><rect x="279.5" y="862.5" width="13" height="13" fill="none" stroke="#f4f6fa" stroke-width="1.5"/><path d="M280 875 L292 863" stroke="#f4f6fa" stroke-width="1"/><circle cx="357.8" cy="864.3" r="4.3" fill="#2a7fbf"/><path d="M350.8 874 V872.5 Q350.8 869.6 354.5 869.6 L361.1 869.6 Q364.8 869.6 364.8 872.5 V874 Z" fill="#2a7fbf"/><rect x="278" y="889" width="16" height="16" fill="#fff"/><rect x="279" y="890" width="14" height="14" fill="#2e3d56"/><rect x="281" y="896" width="10" height="2" fill="#fff"/><circle cx="360.7" cy="892.8" r="2.3" fill="#2a7fbf" stroke="#fff" stroke-width="0.7"/><path d="M358.7 899.5 V897.8 Q358.7 895.7 360.9 895.7 H362.7 Q364.9 895.7 364.9 897.8 V899.5 Z" fill="#2a7fbf" stroke="#fff" stroke-width="0.7"/><circle cx="354.5" cy="894.4" r="2.6" fill="#2a7fbf" stroke="#fff" stroke-width="0.8"/><path d="M351.0 901.5 V899.5 Q351.0 897.1 353.5 897.1 H356.3 Q358.9 897.1 358.9 899.5 V901.5 Z" fill="#2a7fbf" stroke="#fff" stroke-width="0.8"/><circle cx="360.7" cy="920.8" r="2.3" fill="#2a7fbf" stroke="#fff" stroke-width="0.7"/><path d="M358.7 927.5 V925.8 Q358.7 923.7 360.9 923.7 H362.7 Q364.9 923.7 364.9 925.8 V927.5 Z" fill="#2a7fbf" stroke="#fff" stroke-width="0.7"/><circle cx="354.5" cy="922.4" r="2.6" fill="#2a7fbf" stroke="#fff" stroke-width="0.8"/><path d="M351.0 929.5 V927.5 Q351.0 925.1 353.5 925.1 H356.3 Q358.9 925.1 358.9 927.5 V929.5 Z" fill="#2a7fbf" stroke="#fff" stroke-width="0.8"/><rect x="279.5" y="946.5" width="13" height="13" fill="none" stroke="#f4f6fa" stroke-width="1.5"/><path d="M280 959 L292 947" stroke="#f4f6fa" stroke-width="1"/><rect x="351.0" y="947.5" width="13" height="9" fill="#fff" stroke="#555" stroke-width="1.1"/><path d="M353.5 952 H358.5" stroke="#2a6db3" stroke-width="1.6"/><circle cx="360.5" cy="952" r="1.7" fill="none" stroke="#2a6db3" stroke-width="1.3"/></svg>
<div class="a" style="left:254px;top:294px;width:1481px;height:1px;background:#8c8c8c"></div>
<div class="a" style="left:254px;top:322px;width:1481px;height:1px;background:#8c8c8c"></div>
<div class="a" style="left:273px;top:350px;width:1462px;height:1px;background:#8c8c8c"></div>
<div class="a" style="left:273px;top:378px;width:1462px;height:1px;background:#8c8c8c"></div>
<div class="a" style="left:273px;top:406px;width:1462px;height:1px;background:#8c8c8c"></div>
<div class="a" style="left:273px;top:434px;width:1462px;height:1px;background:#8c8c8c"></div>
<div class="a" style="left:274px;top:462px;width:52px;height:1px;background:#f3f5f9"></div>
<div class="a" style="left:328px;top:462px;width:1407px;height:1px;background:#f0f2f6"></div>
<div class="a" style="left:274px;top:490px;width:52px;height:1px;background:#f3f5f9"></div>
<div class="a" style="left:328px;top:490px;width:1407px;height:1px;background:#f0f2f6"></div>
<div class="a" style="left:254px;top:518px;width:1481px;height:1px;background:#8c8c8c"></div>
<div class="a" style="left:254px;top:546px;width:1481px;height:1px;background:#8c8c8c"></div>
<div class="a" style="left:273px;top:574px;width:1462px;height:1px;background:#8c8c8c"></div>
<div class="a" style="left:273px;top:602px;width:1462px;height:1px;background:#8c8c8c"></div>
<div class="a" style="left:273px;top:630px;width:1462px;height:1px;background:#8c8c8c"></div>
<div class="a" style="left:273px;top:658px;width:1462px;height:1px;background:#8c8c8c"></div>
<div class="a" style="left:273px;top:686px;width:1462px;height:1px;background:#8c8c8c"></div>
<div class="a" style="left:274px;top:714px;width:52px;height:1px;background:#f3f5f9"></div>
<div class="a" style="left:328px;top:714px;width:1407px;height:1px;background:#f0f2f6"></div>
<div class="a" style="left:254px;top:742px;width:1481px;height:1px;background:#8c8c8c"></div>
<div class="a" style="left:254px;top:770px;width:1481px;height:1px;background:#8c8c8c"></div>
<div class="a" style="left:273px;top:798px;width:1462px;height:1px;background:#8c8c8c"></div>
<div class="a" style="left:273px;top:826px;width:1462px;height:1px;background:#8c8c8c"></div>
<div class="a" style="left:274px;top:854px;width:52px;height:1px;background:#f3f5f9"></div>
<div class="a" style="left:328px;top:854px;width:1407px;height:1px;background:#f0f2f6"></div>
<div class="a" style="left:273px;top:882px;width:1462px;height:1px;background:#8c8c8c"></div>
<div class="a" style="left:273px;top:910px;width:1462px;height:1px;background:#8c8c8c"></div>
<div class="a" style="left:274px;top:938px;width:52px;height:1px;background:#f3f5f9"></div>
<div class="a" style="left:328px;top:938px;width:1407px;height:1px;background:#f0f2f6"></div>
<div class="a" style="left:254px;top:266px;width:1481px;height:1px;background:#8c8c8c"></div>
<div class="a" style="left:254px;top:1003px;width:1633px;height:21px;background:linear-gradient(#fff,#f2f2f2)"></div>
<div class="t" style="left:259px;top:1009px;font-size:12.9px;color:#111">Rows Loaded: 348 | Rows Displayed: 348 | Rows Selected: 1 | Hierarchy view with 4 top row(s)</div></body></html>
